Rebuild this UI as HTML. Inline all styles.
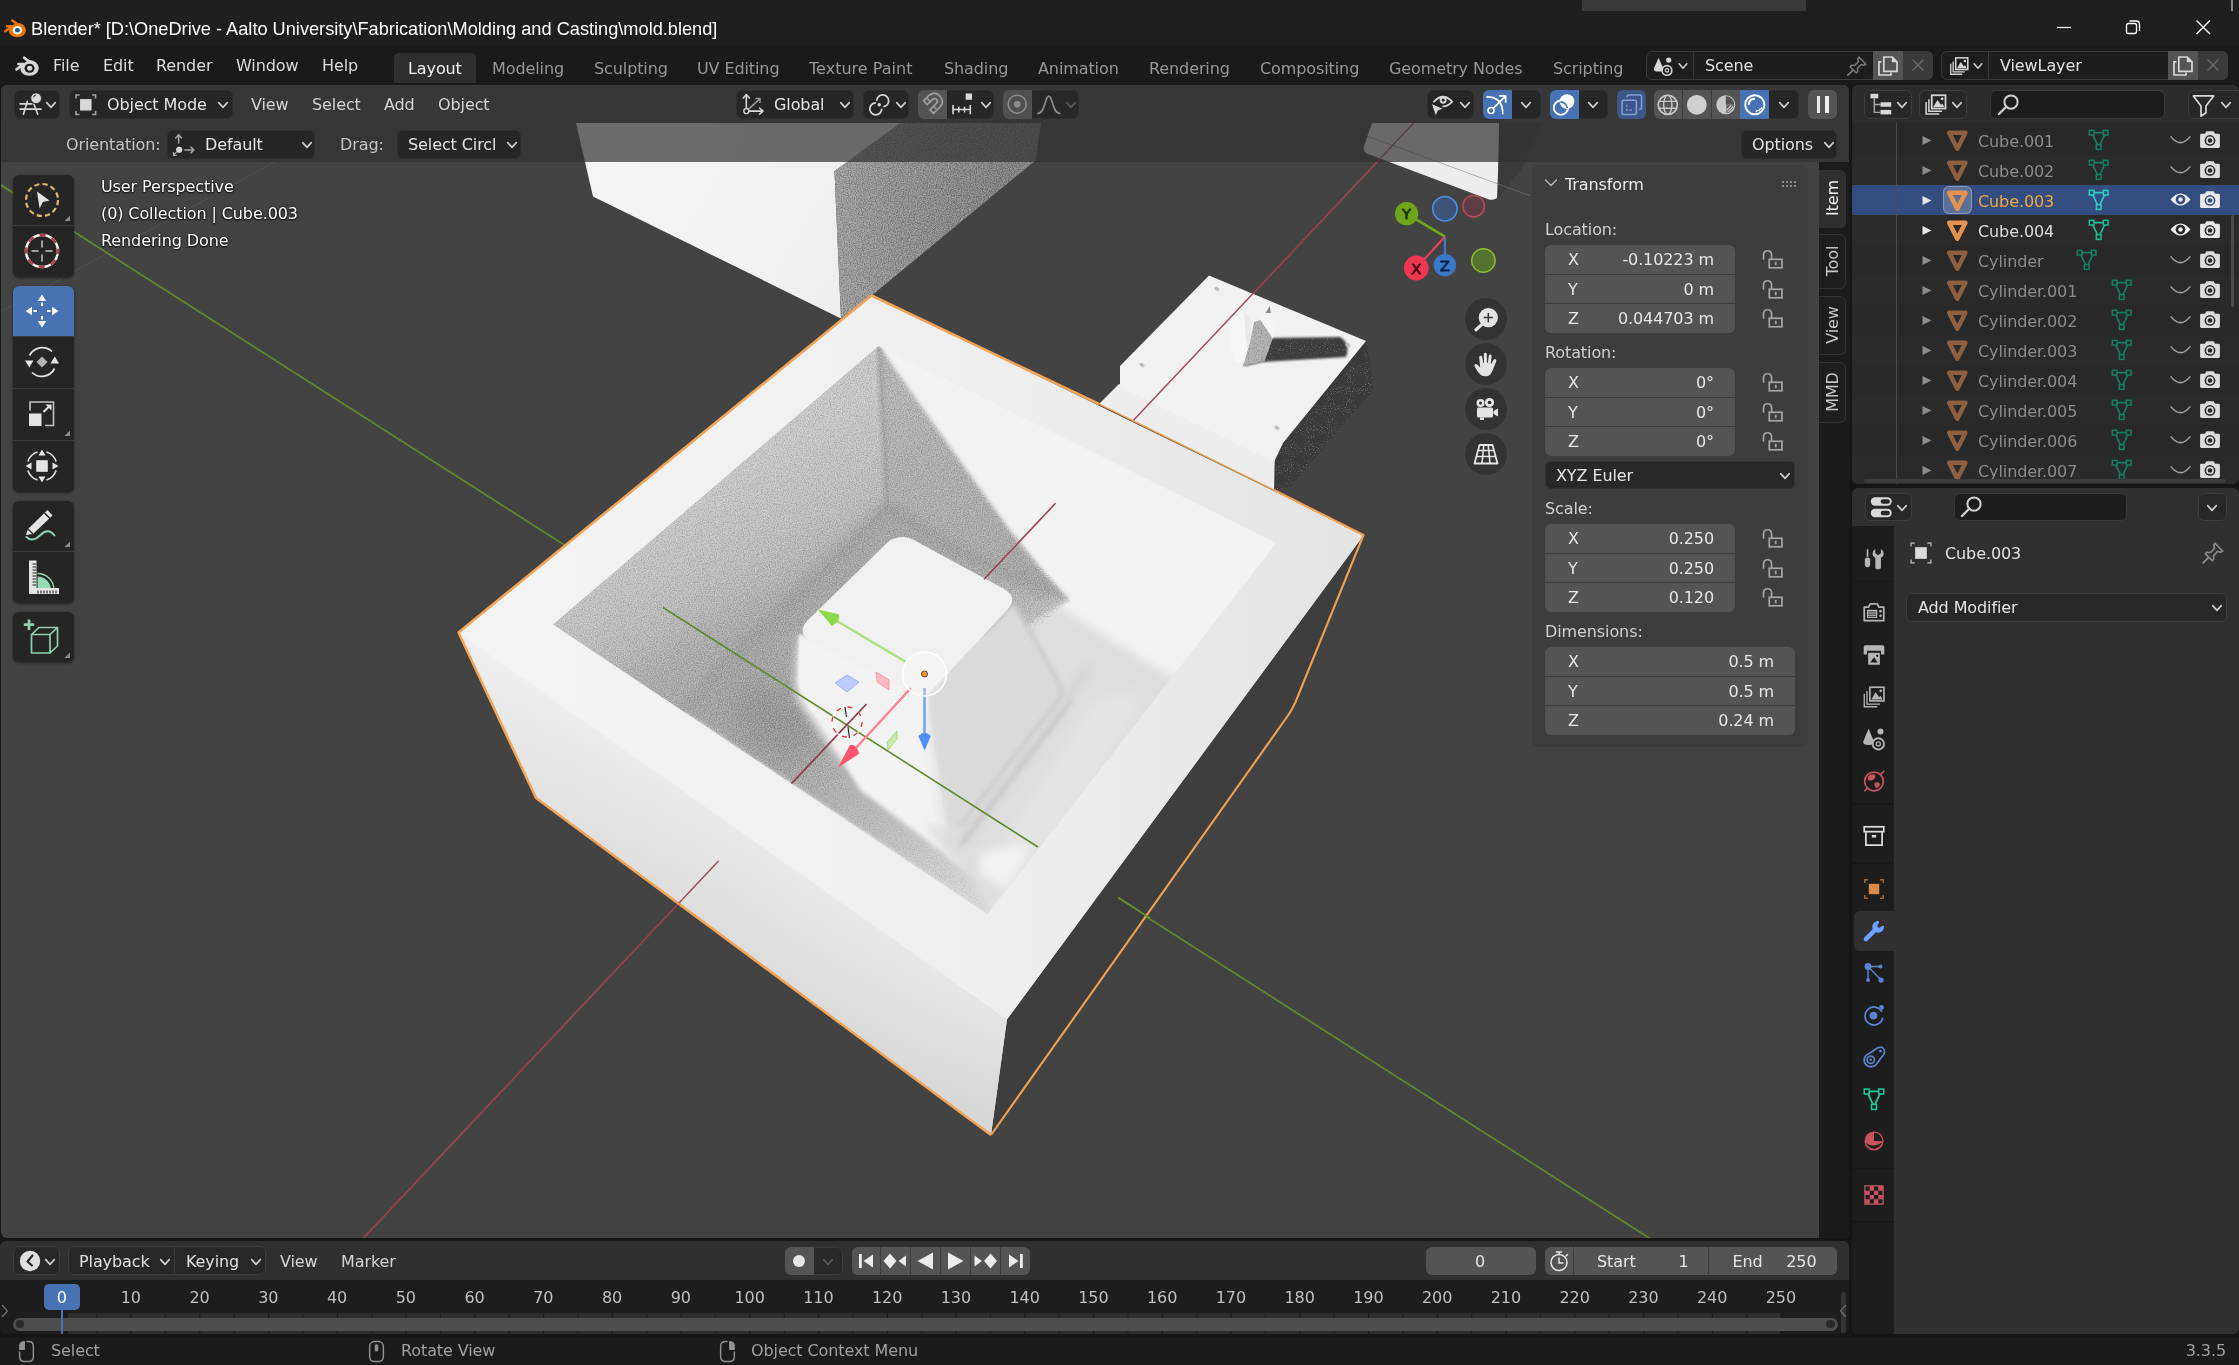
<!DOCTYPE html>
<html lang="en"><head><meta charset="utf-8"><title>Blender* [D:\OneDrive - Aalto University\Fabrication\Molding and Casting\mold.blend]</title><style>
html,body{margin:0;padding:0;background:#181818;}
#root{position:relative;width:2239px;height:1365px;overflow:hidden;background:#161616;will-change:transform;-webkit-font-smoothing:antialiased;
 font-family:"DejaVu Sans","Liberation Sans",sans-serif;font-size:16px;color:#d9d9d9;}
#root div,#root span,#root svg{position:absolute;box-sizing:border-box;}
.t{white-space:nowrap;line-height:24px;height:24px;letter-spacing:-0.1px;}
.c{transform:translateX(-50%);}
.sh{text-shadow:0 1px 2px rgba(0,0,0,.9),0 0 2px rgba(0,0,0,.8);color:#fff;}
.btn{background:#282828;border:1px solid #3d3d3d;border-radius:6px;}
.hbtn{background:#262626;border:1px solid #2e2e2e;border-radius:6px;}
.fld{background:#545454;}
.dim{color:#989898;}
</style></head>
<body><div id="root">
<div style="left:0px;top:0px;width:2239px;height:44.5px;background:#1f1f1f;"></div>
<div style="left:1582px;top:0px;width:224px;height:10.5px;background:#3a3a3a;"></div>
<div style="left:2231px;top:0px;width:1.5px;height:10.5px;background:#8a8a8a;"></div>
<svg class="i" style="left:1.5px;top:16.5px" width="26" height="21.7" viewBox="0 0 24 20"><path d="M3 13.2 L9.2 8.6 H4.6 M9.6 3.2 L13.2 6" fill="none" stroke="#ea7600" stroke-width="2.3" stroke-linecap="round" stroke-linejoin="round"/><path d="M13.6 5.2 C18.6 5.2 22 8.6 22 12.2 C22 15.8 18.6 18.6 14 18.6 C9.4 18.6 6.4 15.8 6.4 12.6 C6.4 11 7.4 9.4 8.6 8.4 Z" fill="#ea7600"/><ellipse cx="14.2" cy="12.2" rx="4.3" ry="3.9" fill="#ffffff"/><ellipse cx="14.3" cy="12.2" rx="2.3" ry="2.1" fill="#265787"/></svg>
<span class="t" style="left:31px;top:17px;font-family:'Liberation Sans',sans-serif;font-size:18.2px;letter-spacing:0;color:#fff;">Blender* [D:\OneDrive - Aalto University\Fabrication\Molding and Casting\mold.blend]</span>
<svg class="i" style="left:2040px;top:10px;" width="190" height="36" viewBox="0 0 190 36"><path d="M17 17.5 H31" stroke="#fff" stroke-width="1.2"/><rect x="86.5" y="13.5" width="10" height="10" rx="2" fill="none" stroke="#fff" stroke-width="1.3"/><path d="M89.5 11 H96 Q99.5 11 99.5 14.5 V21" fill="none" stroke="#fff" stroke-width="1.3"/><path d="M156.500 10.500 L170 24 M170 10.500 L156.500 24" stroke="#fff" stroke-width="1.4"/></svg>
<div style="left:0px;top:44.5px;width:2239px;height:40.5px;background:#1a1a1a;"></div>
<svg class="i" style="left:12.5px;top:53.5px" width="28" height="23.3" viewBox="0 0 24 20"><path d="M3 13.2 L9.2 8.6 H4.6 M9.6 3.2 L13.2 6" fill="none" stroke="#d6d6d6" stroke-width="2.3" stroke-linecap="round" stroke-linejoin="round"/><path d="M13.6 5.2 C18.6 5.2 22 8.6 22 12.2 C22 15.8 18.6 18.6 14 18.6 C9.4 18.6 6.4 15.8 6.4 12.6 C6.4 11 7.4 9.4 8.6 8.4 Z" fill="#d6d6d6"/><ellipse cx="14.2" cy="12.2" rx="4.3" ry="3.9" fill="#1a1a1a"/><ellipse cx="14.3" cy="12.2" rx="2.3" ry="2.1" fill="#d6d6d6"/></svg>
<span class="t" style="left:53px;top:54px;color:#dcdcdc;">File</span>
<span class="t" style="left:103px;top:54px;color:#dcdcdc;">Edit</span>
<span class="t" style="left:156px;top:54px;color:#dcdcdc;">Render</span>
<span class="t" style="left:236px;top:54px;color:#dcdcdc;">Window</span>
<span class="t" style="left:322px;top:54px;color:#dcdcdc;">Help</span>
<div style="left:394px;top:52.8px;width:82px;height:30.2px;background:#2f2f2f;border-radius:5px 5px 0 0;"></div>
<span class="t" style="left:408px;top:57px;color:#f0f0f0;">Layout</span>
<span class="t" style="left:492px;top:57px;color:#989898;">Modeling</span>
<span class="t" style="left:594px;top:57px;color:#989898;">Sculpting</span>
<span class="t" style="left:697px;top:57px;color:#989898;">UV Editing</span>
<span class="t" style="left:809px;top:57px;color:#989898;letter-spacing:0.02px;">Texture Paint</span>
<span class="t" style="left:944px;top:57px;color:#989898;">Shading</span>
<span class="t" style="left:1038px;top:57px;color:#989898;">Animation</span>
<span class="t" style="left:1149px;top:57px;color:#989898;">Rendering</span>
<span class="t" style="left:1260px;top:57px;color:#989898;">Compositing</span>
<span class="t" style="left:1389px;top:57px;color:#989898;">Geometry Nodes</span>
<span class="t" style="left:1553px;top:57px;color:#989898;">Scripting</span>
<div style="left:1646px;top:50.5px;width:287px;height:29.7px;background:#1d1d1d;border:1px solid #3a3a3a;border-radius:6px;"></div>
<div style="left:1693px;top:50.5px;width:1px;height:29.7px;background:#3a3a3a;"></div>
<div style="left:1873px;top:50.5px;width:30px;height:29.7px;background:#545454;"></div>
<div style="left:1903px;top:50.5px;width:30px;height:29.7px;background:#3a3a3a;border-radius:0 6px 6px 0;"></div>
<svg class="i" style="left:1652px;top:55px" width="22" height="22" viewBox="0 0 20 20"><path d="M6 2.5 L10.4 12.4 Q10.4 15 6 15 Q1.6 15 1.6 12.4 Z" fill="#d6d6d6"/><circle cx="15.2" cy="4.6" r="2.4" fill="#d6d6d6"/><circle cx="13.6" cy="14" r="4.4" fill="#181818" stroke="#d6d6d6" stroke-width="1.5"/><circle cx="13.6" cy="14" r="1.6" fill="none" stroke="#d6d6d6" stroke-width="1.1"/></svg>
<svg class="i" style="left:1675px;top:58px" width="16" height="16" viewBox="-8 -8 16 16"><path d="M-3.87 -2.16 L0 2.16 L3.87 -2.16" fill="none" stroke="#d0d0d0" stroke-width="1.6" stroke-linecap="round" stroke-linejoin="round"/></svg>
<span class="t" style="left:1705px;top:54px;color:#e0e0e0;">Scene</span>
<svg class="i" style="left:1845px;top:54px" width="24" height="24" viewBox="0 0 20 20"><path d="M11.5 2.5 L17.5 8.5 L15.8 9.4 L13.6 8.8 L10.4 12 L10.6 14.6 L9.4 15.8 L4.2 10.6 L5.4 9.4 L8 9.6 L11.2 6.4 L10.6 4.2 Z" fill="none" stroke="#7a7a7a" stroke-width="1.3" stroke-linejoin="round"/><path d="M6.6 13.4 L2.4 17.6" stroke="#7a7a7a" stroke-width="1.5" stroke-linecap="round"/></svg>
<svg class="i" style="left:1876px;top:53.5px" width="24" height="24" viewBox="0 0 20 20"><path d="M4.5 6.5 H2.5 V17.5 H12.5 V15.5" fill="none" stroke="#d8d8d8" stroke-width="1.4"/><path d="M6.5 2.5 H13.5 L17.5 6.5 V14.5 H6.5 Z" fill="none" stroke="#d8d8d8" stroke-width="1.4" stroke-linejoin="round"/><path d="M13.2 2.5 V6.8 H17.5 Z" fill="#d8d8d8"/></svg>
<svg class="i" style="left:1908px;top:55px" width="20" height="20" viewBox="0 0 20 20"><path d="M5 5 L15 15 M15 5 L5 15" stroke="#686868" stroke-width="1.5" stroke-linecap="round"/></svg>
<div style="left:1941px;top:50.5px;width:287px;height:29.7px;background:#1d1d1d;border:1px solid #3a3a3a;border-radius:6px;"></div>
<div style="left:1988px;top:50.5px;width:1px;height:29.7px;background:#3a3a3a;"></div>
<div style="left:2168px;top:50.5px;width:30px;height:29.7px;background:#545454;"></div>
<div style="left:2198px;top:50.5px;width:30px;height:29.7px;background:#3a3a3a;border-radius:0 6px 6px 0;"></div>
<svg class="i" style="left:1948px;top:55px" width="22" height="22" viewBox="0 0 20 20"><path d="M2.5 8 V17.5 H13" fill="none" stroke="#d6d6d6" stroke-width="1.2"/><path d="M4.7 5.8 V15.3 H15.2" fill="none" stroke="#d6d6d6" stroke-width="1.2"/><rect x="7" y="2.6" width="11" height="10.6" fill="#1d1d1d" stroke="#d6d6d6" stroke-width="1.4"/><path d="M8.2 12 L11.6 6.4 L14.4 10.4 L15.4 9.2 L17 12 Z" fill="#d6d6d6"/><circle cx="15.3" cy="5.4" r="1.1" fill="#d6d6d6"/></svg>
<svg class="i" style="left:1970px;top:58px" width="16" height="16" viewBox="-8 -8 16 16"><path d="M-3.87 -2.16 L0 2.16 L3.87 -2.16" fill="none" stroke="#d0d0d0" stroke-width="1.6" stroke-linecap="round" stroke-linejoin="round"/></svg>
<span class="t" style="left:2000px;top:54px;color:#e0e0e0;">ViewLayer</span>
<svg class="i" style="left:2171px;top:53.5px" width="24" height="24" viewBox="0 0 20 20"><path d="M4.5 6.5 H2.5 V17.5 H12.5 V15.5" fill="none" stroke="#d8d8d8" stroke-width="1.4"/><path d="M6.5 2.5 H13.5 L17.5 6.5 V14.5 H6.5 Z" fill="none" stroke="#d8d8d8" stroke-width="1.4" stroke-linejoin="round"/><path d="M13.2 2.5 V6.8 H17.5 Z" fill="#d8d8d8"/></svg>
<svg class="i" style="left:2203px;top:55px" width="20" height="20" viewBox="0 0 20 20"><path d="M5 5 L15 15 M15 5 L5 15" stroke="#686868" stroke-width="1.5" stroke-linecap="round"/></svg>
<svg class="i" style="left:0;top:0" width="2239" height="1365" viewBox="0 0 2239 1365">
<defs>
<clipPath id="vp"><rect x="1" y="85" width="1848" height="1153" rx="6"/></clipPath>
<clipPath id="cav"><polygon points="878.5,346 1276.5,543 987.5,914.5 553,624.5"/></clipPath>
<filter id="b1" x="-20%" y="-20%" width="140%" height="140%"><feGaussianBlur stdDeviation="1.1"/></filter>
<filter id="b2" x="-20%" y="-20%" width="140%" height="140%"><feGaussianBlur stdDeviation="2"/></filter>
<filter id="b5" x="-30%" y="-30%" width="160%" height="160%"><feGaussianBlur stdDeviation="5"/></filter>
<filter id="b9" x="-30%" y="-30%" width="160%" height="160%"><feGaussianBlur stdDeviation="9"/></filter>
<filter id="b16" x="-40%" y="-40%" width="180%" height="180%"><feGaussianBlur stdDeviation="16"/></filter>
<filter id="grain" x="0" y="0" width="100%" height="100%" color-interpolation-filters="sRGB">
 <feTurbulence type="fractalNoise" baseFrequency="0.85" numOctaves="2" seed="3" result="n"/>
 <feColorMatrix in="n" type="matrix" values="0 0 0 0 0  0 0 0 0 0  0 0 0 0 0  -1.5 0 0 0 0.78"/>
 <feComposite in2="SourceGraphic" operator="in"/>
</filter>
<filter id="grainl" x="0" y="0" width="100%" height="100%" color-interpolation-filters="sRGB">
 <feTurbulence type="fractalNoise" baseFrequency="0.85" numOctaves="2" seed="3" result="n"/>
 <feColorMatrix in="n" type="matrix" values="0 0 0 0 1  0 0 0 0 1  0 0 0 0 1  1.5 0 0 0 -0.72"/>
 <feComposite in2="SourceGraphic" operator="in"/>
</filter>
<filter id="grainw" x="0" y="0" width="100%" height="100%" color-interpolation-filters="sRGB">
 <feTurbulence type="fractalNoise" baseFrequency="0.95" numOctaves="1" seed="8" result="n"/>
 <feColorMatrix in="n" type="matrix" values="0 0 0 0 1  0 0 0 0 1  0 0 0 0 1  3 0 0 0 -1.75"/>
 <feComposite in2="SourceGraphic" operator="in"/>
</filter>
<linearGradient id="gLeft" gradientUnits="userSpaceOnUse" x1="732.700" y1="825.700" x2="652" y2="940">
 <stop offset="0" stop-color="#e9e9e9"/><stop offset="0.35" stop-color="#e2e2e2"/><stop offset="1" stop-color="#d7d7d7"/></linearGradient>
<linearGradient id="gLeft2" gradientUnits="userSpaceOnUse" x1="480" y1="680" x2="1000" y2="1080">
 <stop offset="0" stop-color="#ffffff" stop-opacity="0.25"/><stop offset="0.5" stop-color="#ffffff" stop-opacity="0"/><stop offset="1" stop-color="#000000" stop-opacity="0.025"/></linearGradient>
<linearGradient id="gRim" gradientUnits="userSpaceOnUse" x1="500" y1="600" x2="1350" y2="600">
 <stop offset="0" stop-color="#f3f3f3"/><stop offset="0.6" stop-color="#eeeeee"/><stop offset="1" stop-color="#e4e4e4"/></linearGradient>
<linearGradient id="gUp" gradientUnits="userSpaceOnUse" x1="600" y1="160" x2="840" y2="300">
 <stop offset="0" stop-color="#f5f5f5"/><stop offset="1" stop-color="#eeeeee"/></linearGradient>
</defs>
<g clip-path="url(#vp)">
<rect x="0" y="85" width="1849" height="1153" fill="#434343"/>
<line x1="0" y1="312" x2="280" y2="159" stroke="#505050" stroke-width="1"/><line x1="-10" y1="178.100" x2="1660" y2="1244.900" stroke="#5f8a2c" stroke-width="1.7"/>
<line x1="357.800" y1="1244" x2="1443" y2="92" stroke="#96434f" stroke-width="1.8"/>
<path d="M1372 123 L1500 123 L1497 198 Q1494 200.500 1489 199.500 L1368 154 Q1362 151 1364 146 Z" fill="#ededed"/>
<path d="M1499 123 L1543 123 L1522 168 L1498 199 Z" fill="#3b3b3b"/>
<line x1="1377.400" y1="161.500" x2="1413.700" y2="123" stroke="#92424f" stroke-width="1.4" opacity="0.8"/>
<line x1="1366" y1="135.600" x2="1530" y2="195.700" stroke="#7a7a7a" stroke-width="1" opacity="0.55"/>
<polygon points="576,123 593,196.5 841,318.5 834.5,171 905,123" fill="url(#gUp)"/>
<linearGradient id="gUg" gradientUnits="userSpaceOnUse" x1="835" y1="200" x2="1000" y2="200"><stop offset="0" stop-color="#9c9c9c"/><stop offset="1" stop-color="#828282"/></linearGradient>
<polygon points="834.5,171 900,123 1041,123 1036,160 871,296 841,318.5" fill="url(#gUg)"/>
<polygon points="834.5,171 900,123 1041,123 1036,160 871,296 841,318.5" fill="#000" filter="url(#grain)" opacity="0.5"/>
<polygon points="834.5,171 900,123 1041,123 1036,160 871,296 841,318.5" fill="#fff" filter="url(#grainl)" opacity="0.5"/>
<polygon points="1366,341 1374,389 1290,487 1275,490 1274,447" fill="#3a3a3a"/>
<polygon points="1366,352 1374,389 1290,487 1275,490 1274,447" fill="#fff" filter="url(#grainw)" opacity="0.5"/>
<polygon points="1119,384 1099,404 1274,490 1275,447" fill="#ededed"/>
<polygon points="1209,275.5 1366,341 1283,443 1274,462 1120,387 1120,366" fill="#f1f1f1"/>
<path d="M1271 338 L1340 337 Q1351 344 1346 357 L1262 362 L1243 366.500 Z" fill="#3c3c3c" filter="url(#b1)"/>
<polygon points="1270,340 1341,337 1348,352 1262,361 1243,366" fill="#fff" filter="url(#grainw)" opacity="0.45"/>
<polygon points="1230.7,318 1244,311.8 1251.5,319 1250,361 1236,363 1228.7,338.4" fill="#f6f6f6"/>
<polygon points="1244,311.8 1251.5,319 1250,361 1246,340" fill="#e9e9e9"/>
<polygon points="1254,322 1260.5,320 1272.8,338.4 1264.6,361 1243,366 1250,342.5" fill="#b4b4b4"/>
<polygon points="1254,322 1260.5,320 1272.8,338.4 1264.6,361 1243,366 1250,342.5" fill="#000" filter="url(#grain)" opacity="0.45"/>
<polygon points="1260.5,320 1265.6,313.8 1277,321 1272.8,338.4" fill="#f4f4f4"/>
<polygon points="1265.6,313 1269.7,306 1270.9,313" fill="#8a8a8a"/>
<ellipse cx="1217" cy="289" rx="2.8" ry="2" fill="#c9c9c9" transform="rotate(25 1217 289)"/><ellipse cx="1216.4" cy="288.7" rx="1.5" ry="1.1" fill="#b0b0b0" transform="rotate(25 1217 289)"/>
<ellipse cx="1142" cy="365" rx="2.8" ry="2" fill="#c9c9c9" transform="rotate(25 1142 365)"/><ellipse cx="1141.4" cy="364.7" rx="1.5" ry="1.1" fill="#b0b0b0" transform="rotate(25 1142 365)"/>
<ellipse cx="1348" cy="345" rx="2.8" ry="2" fill="#c9c9c9" transform="rotate(25 1348 345)"/><ellipse cx="1347.4" cy="344.7" rx="1.5" ry="1.1" fill="#b0b0b0" transform="rotate(25 1348 345)"/>
<ellipse cx="1277" cy="428" rx="2.8" ry="2" fill="#c9c9c9" transform="rotate(25 1277 428)"/><ellipse cx="1276.4" cy="427.7" rx="1.5" ry="1.1" fill="#b0b0b0" transform="rotate(25 1277 428)"/>
<line x1="1132.800" y1="421" x2="1253.500" y2="293" stroke="#a34a58" stroke-width="1.5"/>
<polygon points="1363.5,535 1294,707 991,1135 1007,1019" fill="#3e3e3e"/>
<polygon points="871.5,295.5 1363.5,535 1007,1019 991,1135 536,798 458.5,632.5" fill="#ececec"/>
<polygon points="458.5,632.5 1007,1019 991,1135 536,798" fill="url(#gLeft)"/>
<polygon points="458.5,632.5 1007,1019 991,1135 536,798" fill="url(#gLeft2)"/>
<polygon points="871.5,295.5 1363.5,535 1007,1019 458.5,632.5" fill="url(#gRim)" stroke="url(#gRim)" stroke-width="0.8"/>
<g clip-path="url(#cav)">
<linearGradient id="gWall" gradientUnits="userSpaceOnUse" x1="716" y1="485" x2="786" y2="606"><stop offset="0" stop-color="#c8c8c8"/><stop offset="0.6" stop-color="#bcbcbc"/><stop offset="1" stop-color="#aaaaaa"/></linearGradient>
<linearGradient id="gFloor" gradientUnits="userSpaceOnUse" x1="720" y1="690" x2="990" y2="900"><stop offset="0" stop-color="#a6a6a6"/><stop offset="0.3" stop-color="#a8a8a8"/><stop offset="0.55" stop-color="#b8b8b8"/><stop offset="0.8" stop-color="#cccccc"/><stop offset="1" stop-color="#dadada"/></linearGradient>
<linearGradient id="gWallR" gradientUnits="userSpaceOnUse" x1="880" y1="400" x2="1040" y2="580"><stop offset="0" stop-color="#b4b4b4"/><stop offset="1" stop-color="#a6a6a6"/></linearGradient>
<polygon points="878.5,346 1276.5,543 987.5,914.5 553,624.5" fill="#f2f2f2"/>
<polygon points="1005,612 1056,604 1120,646 1182,682 1100,790 987.5,914.5 930,830 920,700" fill="#dedede" filter="url(#b5)"/>
<polygon points="1095,700 1150,690 1060,830 1015,880 1005,840" fill="#e4e4e4" filter="url(#b9)"/>
<polyline points="962,842 1030,750 1088,668" fill="none" stroke="#cccccc" stroke-width="5" filter="url(#b5)" opacity="0.9"/>
<polygon points="984,850 1032,846 1006,890 978,872" fill="#f2f2f2" filter="url(#b5)"/>
<polygon points="878.5,346 960,500 1068,600 1020,630 960,640 900,650 820,720 860,790 940,850 975,880 1000,925 987.5,914.5 553,624.5" fill="url(#gFloor)" filter="url(#b2)"/>
<polygon points="878.5,346 945,440 1008,528 1040,568 1070,602 960,554 887,504" fill="url(#gWallR)" filter="url(#b2)"/>
<polygon points="878.5,346 553,624.5 684,712 887,504" fill="url(#gWall)"/>
<polyline points="887,504 800,590 720,668 684,712" fill="none" stroke="#989898" stroke-width="10" filter="url(#b5)" opacity="0.55"/>
<polyline points="887,504 960,552 1050,598" fill="none" stroke="#989898" stroke-width="10" filter="url(#b5)" opacity="0.6"/>
<line x1="878.5" y1="346" x2="887" y2="503" stroke="#a0a0a0" stroke-width="4" filter="url(#b2)"/>
<ellipse cx="775" cy="722" rx="48" ry="30" fill="#8e8e8e" filter="url(#b16)" opacity="0.75" transform="rotate(38 775 722)"/>
<polygon points="878.5,346 1008,528 1070,600 1000,660 800,700 850,790 800,789 553,624.5" fill="#000" filter="url(#grain)" opacity="0.3"/>
<polygon points="878.5,346 1008,528 1070,600 1000,660 800,700 850,790 800,789 553,624.5" fill="#fff" filter="url(#grainl)" opacity="0.55"/>
<polygon points="800,789 850,790 960,870 987.5,914.5" fill="#000" filter="url(#grain)" opacity="0.2"/>
<polygon points="800,789 850,790 960,870 987.5,914.5" fill="#fff" filter="url(#grainl)" opacity="0.3"/>
<path d="M926 693 L1014 604 L1060 684 Q1064 692 1059 699 L960 826 Q952 834 943 828 Z" fill="#dadada" filter="url(#b2)"/>
<path d="M1014 604 L1060 684 Q1064 692 1059 699 L960 826" fill="none" stroke="#c6c6c6" stroke-width="3" filter="url(#b2)"/>
<path d="M960 846 L1072 700" fill="none" stroke="#c4c4c4" stroke-width="4" filter="url(#b2)" opacity="0.8"/>
<path d="M799 636 L926 693 L948 833 Q905 812 872 790 L836 754 L802 706 Q795 694 796 680 Z" fill="#f2f2f2" filter="url(#b5)"/>
<path d="M799 634 L926 693 L946 826 L908 806 L874 782 L840 748 L806 702 Q798 690 798 676 Z" fill="#f2f2f2" filter="url(#b1)"/>
<path d="M929 708 L946 828" fill="none" stroke="#d2d2d2" stroke-width="5" filter="url(#b5)" opacity="0.8"/>
<path d="M889 541 Q900 534 912 539 L1004 589 Q1018 597 1008 609 L932 690 Q924 697 912 692 L812 642 Q797 634 806 622 Z" fill="#f0f0f0"/>
<line x1="663" y1="607.5" x2="1038" y2="847" stroke="#5f8a2c" stroke-width="1.6"/>
<line x1="790" y1="785.200" x2="866.500" y2="704" stroke="#8d3f4c" stroke-width="1.8"/>
<line x1="984" y1="579.200" x2="1055.500" y2="503.300" stroke="#9a4452" stroke-width="1.6"/>
</g>
<polyline points="1099,404 871.5,295.5 458.5,632.5 536,798 991,1135" fill="none" stroke="#f2a456" stroke-width="2.5" stroke-linejoin="round"/>
<polyline points="991,1135 1288,715.5 1292,709 1295.5,702 1363.5,535 1274,490" fill="none" stroke="#f0a050" stroke-width="2.1" stroke-linejoin="round"/>
<polyline points="1099,404 1274,490" fill="none" stroke="#f0a050" stroke-width="1.6" opacity="0.9"/>
<line x1="718.500" y1="861" x2="679" y2="903" stroke="#a04a58" stroke-width="1.5"/>
<line x1="1118" y1="897.5" x2="1150" y2="918" stroke="#6a962f" stroke-width="1.5"/>
<circle cx="847" cy="722" r="15" fill="none" stroke="#fff" stroke-width="1.3"/>
<circle cx="847" cy="722" r="15" fill="none" stroke="#e0303c" stroke-width="1.3" stroke-dasharray="5 6.780"/>
<path d="M845 707 L846.500 717 M848 727 L849.500 738" stroke="#1a1a1a" stroke-width="1.1" fill="none"/>
<polygon points="835,683 847,675 859,682 847,692" fill="#b9c8ff" stroke="#8aa0f0" stroke-width="0.8" opacity="0.9"/>
<polygon points="876,672 889,680 889,690 877,682" fill="#ffb3bd" stroke="#f08090" stroke-width="0.8" opacity="0.9"/>
<polygon points="887,742 897,731 897,739 888,750" fill="#c4e8a0" stroke="#a0d070" stroke-width="0.8" opacity="0.9"/>
<line x1="906" y1="662" x2="836" y2="620.500" stroke="#a9e07c" stroke-width="2.4"/>
<path d="M817.800 609.600 L838.900 614.200 Q840.500 621 832 626 Z" fill="#8ed94a"/>
<line x1="911" y1="688" x2="855" y2="749" stroke="#ff8090" stroke-width="2.4"/>
<path d="M838 767.500 L849.800 745.200 Q856 743 859.200 753.800 Z" fill="#ff566e"/>
<line x1="924.5" y1="688" x2="924.5" y2="734" stroke="#6f9cf5" stroke-width="2.4"/>
<path d="M918.400 736 Q924.500 729.500 930.800 736 L924.600 750.500 Z" fill="#4f8df7"/>
<circle cx="924.5" cy="674" r="22" fill="#ffffff" fill-opacity="0.25" stroke="#ffffff" stroke-width="1.6"/>
<circle cx="924.5" cy="674" r="3" fill="#f39a3c" stroke="#3a2a18" stroke-width="0.8"/>
</g></svg>
<div style="left:1px;top:85px;width:1848px;height:38px;background:#373737;border-radius:6px 6px 0 0;"></div>
<div style="left:1px;top:123px;width:1848px;height:39px;background:rgba(48,48,48,.7);"></div>
<div class="hbtn" style="left:14px;top:90px;width:46px;height:28.5px;"></div>
<svg class="i" style="left:17.2px;top:91.2px" width="27.6" height="27.6" viewBox="0 0 24 24"><path d="M2.700 11.200 H13 M2.700 15.800 H20.900 M9 9 L5.600 20.200 M14.800 11.500 L18 20.200" stroke="#d8d8d8" stroke-width="1.400" fill="none" stroke-linecap="round"/><circle cx="16.600" cy="6.300" r="4.700" fill="#d8d8d8" stroke="#262626" stroke-width="0.800"/><path d="M14.200 5.400 A2.900 2.900 0 0 1 16.600 3.600" stroke="#555" stroke-width="1.100" fill="none"/></svg>
<svg class="i" style="left:43px;top:97px" width="16" height="16" viewBox="-8 -8 16 16"><path d="M-4.3 -2.4 L0 2.4 L4.3 -2.4" fill="none" stroke="#d0d0d0" stroke-width="1.6" stroke-linecap="round" stroke-linejoin="round"/></svg>
<div class="hbtn" style="left:69px;top:90px;width:164px;height:28.5px;"></div>
<svg class="i" style="left:72.2px;top:91.2px" width="27.6" height="27.6" viewBox="0 0 24 24"><rect x="7" y="7" width="10" height="10" fill="#d8d8d8"/><path d="M6.500 3.500 H3.500 V6.500 M17.5 3.500 H20.500 V6.500 M3.500 17.5 V20.500 H6.500 M20.500 17.5 V20.500 H17.5" fill="none" stroke="#d8d8d8" stroke-width="1.4" opacity="0.700"/></svg>
<span class="t" style="left:107px;top:93px;color:#e4e4e4;">Object Mode</span>
<svg class="i" style="left:215px;top:97px" width="16" height="16" viewBox="-8 -8 16 16"><path d="M-4.3 -2.4 L0 2.4 L4.3 -2.4" fill="none" stroke="#d0d0d0" stroke-width="1.6" stroke-linecap="round" stroke-linejoin="round"/></svg>
<span class="t" style="left:251px;top:93px;color:#d4d4d4;">View</span>
<span class="t" style="left:312px;top:93px;color:#d4d4d4;">Select</span>
<span class="t" style="left:384px;top:93px;color:#d4d4d4;">Add</span>
<span class="t" style="left:438px;top:93px;color:#d4d4d4;">Object</span>
<div class="hbtn" style="left:736px;top:90px;width:118px;height:28.5px;"></div>
<svg class="i" style="left:739.5px;top:90.7px" width="27.6" height="27.6" viewBox="0 0 24 24"><path d="M5.500 3.500 V17.5 L19.5 17.5" fill="none" stroke="#d8d8d8" stroke-width="1.4" stroke-linecap="round"/><path d="M5.500 17.5 L17 7" fill="none" stroke="#9a9a9a" stroke-width="1.4" stroke-linecap="round"/><path d="M14 6.600 L17.5 6.500 L17.3 10" fill="none" stroke="#9a9a9a" stroke-width="1.3" stroke-linecap="round" stroke-linejoin="round"/><path d="M2.8 6 L5.500 3 L8.200 6 M17 14.800 L20 17.5 L17 20.200" fill="none" stroke="#d8d8d8" stroke-width="1.3" stroke-linecap="round" stroke-linejoin="round"/><circle cx="5.500" cy="17.5" r="2.2" fill="#252525" stroke="#d8d8d8" stroke-width="1.2"/></svg>
<span class="t" style="left:774px;top:93px;color:#e4e4e4;">Global</span>
<svg class="i" style="left:837px;top:97px" width="16" height="16" viewBox="-8 -8 16 16"><path d="M-4.3 -2.4 L0 2.4 L4.3 -2.4" fill="none" stroke="#d0d0d0" stroke-width="1.6" stroke-linecap="round" stroke-linejoin="round"/></svg>
<div class="hbtn" style="left:863px;top:90px;width:46px;height:28.5px;"></div>
<svg class="i" style="left:866.2px;top:90.7px" width="27.6" height="27.6" viewBox="0 0 24 24"><circle cx="14.5" cy="8.500" r="5.200" fill="none" stroke="#d8d8d8" stroke-width="1.5" stroke-dasharray="24 8.700" stroke-dashoffset="-16"/><circle cx="8.500" cy="15.5" r="5.200" fill="none" stroke="#d8d8d8" stroke-width="1.5" stroke-dasharray="24 8.700" stroke-dashoffset="0"/><circle cx="11.5" cy="12" r="1.5" fill="#d8d8d8"/></svg>
<svg class="i" style="left:893px;top:97px" width="16" height="16" viewBox="-8 -8 16 16"><path d="M-4.3 -2.4 L0 2.4 L4.3 -2.4" fill="none" stroke="#d0d0d0" stroke-width="1.6" stroke-linecap="round" stroke-linejoin="round"/></svg>
<div class="hbtn" style="left:918px;top:90px;width:76px;height:28.5px;"></div>
<div style="left:918px;top:90px;width:29px;height:28.5px;background:#545454;border-radius:6px 0 0 6px;"></div>
<svg class="i" style="left:916.66px;top:88.66px" width="31.68" height="31.68" viewBox="0 0 24 24"><path d="M5 9 L9.500 4.500 Q14 1.500 17.5 5.500 Q21 10 17.5 13.5 L12.5 18.5 L9.800 15.8 L14.800 10.800 Q16.200 9.200 14.800 7.800 Q13.400 6.600 12 7.800 L7.700 11.8 Z" fill="none" stroke="#9a9a9a" stroke-width="1.4" stroke-linejoin="round"/><path d="M7.500 7 L10 9.600 M12.500 13 L15.2 15.7" stroke="#9a9a9a" stroke-width="1.2"/></svg>
<svg class="i" style="left:948.7px;top:89.5px" width="27.6" height="27.6" viewBox="0 0 24 24"><path d="M3 17 H19 M3.500 13 V21 M8.500 14.5 V19.5 M13.500 14.5 V19.5 M18.500 13 V21" stroke="#d8d8d8" stroke-width="1.4" fill="none"/><rect x="14.5" y="3" width="5.500" height="5.500" fill="#d8d8d8"/></svg>
<svg class="i" style="left:978px;top:97px" width="16" height="16" viewBox="-8 -8 16 16"><path d="M-4.3 -2.4 L0 2.4 L4.3 -2.4" fill="none" stroke="#d0d0d0" stroke-width="1.6" stroke-linecap="round" stroke-linejoin="round"/></svg>
<div class="hbtn" style="left:1003px;top:90px;width:76px;height:28.5px;opacity:.85"></div>
<div style="left:1003px;top:90px;width:29px;height:28.5px;background:#505050;border-radius:6px 0 0 6px;"></div>
<svg class="i" style="left:1004.1px;top:91.1px" width="26.4" height="26.4" viewBox="0 0 24 24"><circle cx="12" cy="12" r="8.200" fill="none" stroke="#8c8c8c" stroke-width="1.4"/><circle cx="12" cy="12" r="3" fill="#8c8c8c"/></svg>
<svg class="i" style="left:1035.2px;top:90.7px" width="27.6" height="27.6" viewBox="0 0 24 24"><path d="M2.500 19.5 C9 19.5 8.500 4.500 12 4.500 C15.500 4.500 15 19.5 21.5 19.5" fill="none" stroke="#8a8a8a" stroke-width="1.5" stroke-linecap="round"/></svg>
<svg class="i" style="left:1063px;top:97px" width="16" height="16" viewBox="-8 -8 16 16"><path d="M-4.3 -2.4 L0 2.4 L4.3 -2.4" fill="none" stroke="#5a5a5a" stroke-width="1.6" stroke-linecap="round" stroke-linejoin="round"/></svg>
<div class="hbtn" style="left:1427px;top:90px;width:47px;height:28.5px;"></div>
<svg class="i" style="left:1428.2px;top:91.2px" width="27.6" height="27.6" viewBox="0 0 24 24"><path d="M5.200 9.200 Q13 0.800 21 9.200 Q17.5 13.200 13.2 13.400" fill="none" stroke="#d8d8d8" stroke-width="1.600" stroke-linecap="round"/><circle cx="13.2" cy="8" r="3" fill="#d8d8d8"/><circle cx="13.2" cy="8" r="1.300" fill="#262626"/><path d="M2.800 10.800 L13.600 15.400 L8.800 17.200 L6.800 22.200 Z" fill="#d8d8d8" stroke="#262626" stroke-width="0.800"/></svg>
<svg class="i" style="left:1457px;top:97px" width="16" height="16" viewBox="-8 -8 16 16"><path d="M-4.3 -2.4 L0 2.4 L4.3 -2.4" fill="none" stroke="#d0d0d0" stroke-width="1.6" stroke-linecap="round" stroke-linejoin="round"/></svg>
<div class="hbtn" style="left:1483px;top:90px;width:58px;height:28.5px;"></div>
<div style="left:1483px;top:90px;width:29px;height:28.5px;background:#4772b3;border-radius:6px 0 0 6px;"></div>
<svg class="i" style="left:1483.2px;top:91.2px" width="27.6" height="27.6" viewBox="0 0 24 24"><path d="M3.500 5.200 C12 5.200 17 9.500 17.2 19.5" fill="none" stroke="#ffffff" stroke-width="1.5" stroke-linecap="round"/><path d="M8.800 15.2 L19.2 4.800 M14.500 4.300 H19.700 V9.500" fill="none" stroke="#ffffff" stroke-width="1.5" stroke-linecap="round" stroke-linejoin="round"/><circle cx="7" cy="17" r="2.600" fill="#4772b3" stroke="#ffffff" stroke-width="1.4"/></svg>
<svg class="i" style="left:1518px;top:97px" width="16" height="16" viewBox="-8 -8 16 16"><path d="M-4.3 -2.4 L0 2.4 L4.3 -2.4" fill="none" stroke="#d0d0d0" stroke-width="1.6" stroke-linecap="round" stroke-linejoin="round"/></svg>
<div class="hbtn" style="left:1550px;top:90px;width:58px;height:28.5px;"></div>
<div style="left:1550px;top:90px;width:29px;height:28.5px;background:#4772b3;border-radius:6px 0 0 6px;"></div>
<svg class="i" style="left:1550.2px;top:91.2px" width="27.6" height="27.6" viewBox="0 0 24 24"><circle cx="14.8" cy="9.200" r="6.400" fill="#ffffff"/><circle cx="9.500" cy="14.5" r="6.200" fill="none" stroke="#ffffff" stroke-width="1.6"/><path d="M9 9.500 A6 6 0 0 1 15 14.800" fill="none" stroke="#4772b3" stroke-width="1.5"/></svg>
<svg class="i" style="left:1585px;top:97px" width="16" height="16" viewBox="-8 -8 16 16"><path d="M-4.3 -2.4 L0 2.4 L4.3 -2.4" fill="none" stroke="#d0d0d0" stroke-width="1.6" stroke-linecap="round" stroke-linejoin="round"/></svg>
<div style="left:1617px;top:90px;width:29px;height:28.5px;background:#3c5688;border-radius:6px;"></div>
<svg class="i" style="left:1617.7px;top:91.2px" width="27.6" height="27.6" viewBox="0 0 24 24"><rect x="3.500" y="8" width="12.5" height="12.5" rx="1.5" fill="none" stroke="#7f9fd6" stroke-width="1.4"/><path d="M8 5.500 V5 Q8 3.500 9.500 3.500 H19 Q20.500 3.500 20.500 5 V14.500 Q20.500 16 19 16 H18.500" fill="none" stroke="#7f9fd6" stroke-width="1.4"/><path d="M7.500 12 V16.500 H12" fill="none" stroke="#7f9fd6" stroke-width="1.2" stroke-dasharray="2 1.500"/></svg>
<div class="hbtn" style="left:1654px;top:90px;width:145px;height:28.5px;"></div>
<div style="left:1654px;top:90px;width:86.3px;height:28.5px;background:#545454;border-radius:6px 0 0 6px;"></div>
<div style="left:1682.2px;top:90px;width:1px;height:28.5px;background:#3c3c3c;"></div>
<div style="left:1711px;top:90px;width:1px;height:28.5px;background:#3c3c3c;"></div>
<div style="left:1740.2px;top:90px;width:29px;height:28.5px;background:#4772b3;"></div>
<svg class="i" style="left:1654.2px;top:90.7px" width="27.6" height="27.6" viewBox="0 0 24 24"><circle cx="12" cy="12" r="8.300" fill="none" stroke="#c8c8c8" stroke-width="1.500"/><ellipse cx="12" cy="12" rx="3.600" ry="8.300" fill="none" stroke="#c8c8c8" stroke-width="1.200"/><path d="M4.600 9 H19.400 M4.600 15 H19.400" stroke="#c8c8c8" stroke-width="1.200"/></svg>
<svg class="i" style="left:1682.9px;top:90.7px" width="27.6" height="27.6" viewBox="0 0 24 24"><circle cx="12" cy="12" r="8.600" fill="#d0d0d0"/></svg>
<svg class="i" style="left:1711.7px;top:90.7px" width="27.6" height="27.6" viewBox="0 0 24 24"><circle cx="12" cy="12" r="8.300" fill="#c8c8c8"/><path d="M12 12 V4.600 A7.400 7.400 0 0 1 19.400 12 Z" fill="#545454"/><path d="M12.5 12.5 H19.300 A7.300 7.300 0 0 1 12.500 19.300 Z" fill="#545454"/><path d="M13.500 18.500 L18.500 13.500 M15.800 18.600 L18.800 15.600 M12.700 16.600 L16.700 12.600" stroke="#c8c8c8" stroke-width="1.100"/></svg>
<svg class="i" style="left:1740.9px;top:90.7px" width="27.6" height="27.6" viewBox="0 0 24 24"><circle cx="12" cy="12" r="8.300" fill="none" stroke="#ffffff" stroke-width="1.700"/><path d="M6.800 11.500 A5.300 5.300 0 0 1 11.500 6.800" fill="none" stroke="#ffffff" stroke-width="1.700" stroke-linecap="round"/><path d="M13 18.300 L14.500 16.600 M15.300 17.400 L16.800 15.700 M17.200 15.800 L18.300 14.400" stroke="#ffffff" stroke-width="1.200"/></svg>
<svg class="i" style="left:1776px;top:97px" width="16" height="16" viewBox="-8 -8 16 16"><path d="M-4.3 -2.4 L0 2.4 L4.3 -2.4" fill="none" stroke="#d0d0d0" stroke-width="1.6" stroke-linecap="round" stroke-linejoin="round"/></svg>
<div style="left:1808px;top:90px;width:29px;height:28.5px;background:#545454;border-radius:6px;"></div>
<div style="left:1816.5px;top:96px;width:3.5px;height:17px;background:#ececec;"></div>
<div style="left:1825px;top:96px;width:3.5px;height:17px;background:#ececec;"></div>
<span class="t" style="left:66px;top:133px;color:#c4c4c4;">Orientation:</span>
<div class="hbtn" style="left:167px;top:130px;width:148px;height:28.5px;"></div>
<svg class="i" style="left:170.2px;top:130.7px" width="27.6" height="27.6" viewBox="0 0 24 24"><path d="M7.500 3.500 V10.500 M13 16.500 H20.500" fill="none" stroke="#a6a6a6" stroke-width="1.300" stroke-linecap="round"/><path d="M5 6 L7.500 3.300 L10 6 M18.200 14 L20.800 16.500 L18.200 19" fill="none" stroke="#a6a6a6" stroke-width="1.300" stroke-linecap="round" stroke-linejoin="round"/><path d="M5.600 18.400 L3 21 M3 18.600 V21.200 H5.600" fill="none" stroke="#a6a6a6" stroke-width="1.100" stroke-linecap="round"/><circle cx="8" cy="16.300" r="2.700" fill="#d8d8d8"/></svg>
<span class="t" style="left:205px;top:133px;color:#e4e4e4;">Default</span>
<svg class="i" style="left:299px;top:137px" width="16" height="16" viewBox="-8 -8 16 16"><path d="M-4.3 -2.4 L0 2.4 L4.3 -2.4" fill="none" stroke="#d0d0d0" stroke-width="1.6" stroke-linecap="round" stroke-linejoin="round"/></svg>
<span class="t" style="left:340px;top:133px;color:#c4c4c4;">Drag:</span>
<div class="hbtn" style="left:397px;top:130px;width:124px;height:28.5px;"></div>
<span class="t" style="left:408px;top:133px;color:#e4e4e4;">Select Circl</span>
<svg class="i" style="left:504px;top:137px" width="16" height="16" viewBox="-8 -8 16 16"><path d="M-4.3 -2.4 L0 2.4 L4.3 -2.4" fill="none" stroke="#d0d0d0" stroke-width="1.6" stroke-linecap="round" stroke-linejoin="round"/></svg>
<div class="hbtn" style="left:1741px;top:130px;width:96px;height:28.5px;"></div>
<span class="t" style="left:1752px;top:133px;color:#e4e4e4;">Options</span>
<svg class="i" style="left:1821px;top:137px" width="16" height="16" viewBox="-8 -8 16 16"><path d="M-4.3 -2.4 L0 2.4 L4.3 -2.4" fill="none" stroke="#d0d0d0" stroke-width="1.6" stroke-linecap="round" stroke-linejoin="round"/></svg>
<div style="left:13px;top:175px;width:61px;height:102.0px;background:#252525;border-radius:6px;box-shadow:0 1px 3px rgba(0,0,0,.5);"></div>
<svg class="i" style="left:21.7px;top:180.15px" width="40" height="40" viewBox="0 0 40 40"><circle cx="20" cy="20" r="16" fill="none" stroke="#dcb96a" stroke-width="2.2" stroke-dasharray="5.200 3.180"/><path d="M15 11.500 L27.500 20.500 L20.800 22 L17.600 28.500 Z" fill="#e4e4e4"/></svg>
<svg class="i" style="left:64px;top:215.3px;" width="7" height="7" viewBox="0 0 7 7"><path d="M6 0.500 V6 H0.500 Z" fill="#8c8c8c"/></svg>
<div style="left:13px;top:225.3px;width:61px;height:1px;background:#3a3a3a;"></div>
<svg class="i" style="left:21.7px;top:231.15px" width="40" height="40" viewBox="0 0 40 40"><circle cx="20" cy="20" r="16" fill="none" stroke="#f4f4f4" stroke-width="2.500"/><circle cx="20" cy="20" r="16" fill="none" stroke="#b23c4c" stroke-width="2.500" stroke-dasharray="6.300 6.266" stroke-dashoffset="3"/><path d="M20 9.500 V16.500 M20 23.500 V30.500 M9.500 20 H16.500 M23.500 20 H30.500" stroke="#c8c8c8" stroke-width="1.500"/></svg>
<div style="left:13px;top:285.5px;width:61px;height:206.0px;background:#252525;border-radius:6px;box-shadow:0 1px 3px rgba(0,0,0,.5);"></div>
<div style="left:13px;top:285.5px;width:61px;height:50.8px;background:#4772b3;border-radius:6px 6px 0 0;"></div>
<svg class="i" style="left:21.7px;top:290.9px" width="40" height="40" viewBox="0 0 40 40"><path d="M20 3.500 L24.200 10 H15.800 Z M20 36.500 L24.200 30 H15.800 Z M3.500 20 L10 15.800 V24.200 Z M36.500 20 L30 15.800 V24.200 Z" fill="#ffffff"/><path d="M20 11.500 V15 M20 25 V28.500 M11.500 20 H15 M25 20 H28.500" stroke="#ffffff" stroke-width="2"/></svg>
<div style="left:13px;top:336.3px;width:61px;height:1px;background:#3a3a3a;"></div>
<svg class="i" style="left:21.7px;top:342.15000000000003px" width="40" height="40" viewBox="0 0 40 40"><path d="M7.500 13.500 A14.200 14.200 0 0 1 30 9.500" fill="none" stroke="#e4e4e4" stroke-width="1.700"/><path d="M32.500 26.500 A14.200 14.200 0 0 1 10 30.500" fill="none" stroke="#e4e4e4" stroke-width="1.700"/><path d="M3 18.500 H11.500 L7.300 25.500 Z M28.500 21.500 H37 L32.800 14.500 Z" fill="#e4e4e4"/><path d="M20 14.500 L25.500 20 L20 25.500 L14.500 20 Z" fill="#b4b4b4"/></svg>
<div style="left:13px;top:388.0px;width:61px;height:1px;background:#3a3a3a;"></div>
<svg class="i" style="left:21.7px;top:393.75px" width="40" height="40" viewBox="0 0 40 40"><rect x="7" y="19.500" width="12.500" height="12.500" fill="#e4e4e4"/><path d="M8 16.500 V8 H31.500 V31.500 H23" fill="none" stroke="#c4c4c4" stroke-width="1.600"/><path d="M21.500 18 L27.500 12" fill="none" stroke="#e4e4e4" stroke-width="2"/><path d="M23.500 10.500 H29.500 V16.500 Z" fill="#e4e4e4"/></svg>
<svg class="i" style="left:64px;top:429.5px;" width="7" height="7" viewBox="0 0 7 7"><path d="M6 0.500 V6 H0.500 Z" fill="#8c8c8c"/></svg>
<div style="left:13px;top:439.5px;width:61px;height:1px;background:#3a3a3a;"></div>
<svg class="i" style="left:21.7px;top:445.5px" width="40" height="40" viewBox="0 0 40 40"><rect x="14.200" y="14.200" width="11.600" height="11.600" fill="#e4e4e4"/><path d="M9.500 9.500 A14.800 14.800 0 0 1 15.500 5.900 M24.500 5.900 A14.800 14.800 0 0 1 30.500 9.500 A14.800 14.800 0 0 1 34.100 15.500 M34.100 24.500 A14.800 14.800 0 0 1 30.500 30.500 A14.800 14.800 0 0 1 24.500 34.100 M15.500 34.100 A14.800 14.800 0 0 1 9.500 30.500 A14.800 14.800 0 0 1 5.900 24.500 M5.900 15.500 A14.800 14.800 0 0 1 9.500 9.500" fill="none" stroke="#e4e4e4" stroke-width="1.600"/><path d="M20 3.500 L23.500 9.500 H16.500 Z M20 36.500 L23.500 30.500 H16.500 Z M3.500 20 L9.500 16.500 V23.500 Z M36.500 20 L30.500 16.500 V23.500 Z" fill="#e4e4e4"/></svg>
<div style="left:13px;top:501.1px;width:61px;height:101.5px;background:#252525;border-radius:6px;box-shadow:0 1px 3px rgba(0,0,0,.5);"></div>
<svg class="i" style="left:21.7px;top:506.05000000000007px" width="40" height="40" viewBox="0 0 40 40"><path d="M4.500 31 C9 35.500 14 33.500 18.500 29 C23 24.500 28 23.500 32.500 29.500" fill="none" stroke="#8fd0b0" stroke-width="2" stroke-linecap="round"/><path d="M4 29 L6 23 L25.500 4 L30.500 9.500 L11 28 Z" fill="#e4e4e4"/><path d="M22.500 7 L27.800 12.300" stroke="#252525" stroke-width="1.500"/><path d="M6 23 L11 28" stroke="#252525" stroke-width="1.200"/></svg>
<svg class="i" style="left:64px;top:541.0px;" width="7" height="7" viewBox="0 0 7 7"><path d="M6 0.500 V6 H0.500 Z" fill="#8c8c8c"/></svg>
<div style="left:13px;top:551.0px;width:61px;height:1px;background:#3a3a3a;"></div>
<svg class="i" style="left:21.7px;top:556.8px" width="40" height="40" viewBox="0 0 40 40"><path d="M15.500 33 V19.500 A13.500 13.500 0 0 1 29 33 Z" fill="#8fdcb4"/><path d="M15.500 16.500 A16.500 16.500 0 0 1 32 33" fill="none" stroke="#8fdcb4" stroke-width="1.400"/><path d="M7 3.500 H14.500 V31 H37 V37 H7 Z" fill="#e4e4e4"/><path d="M10.500 7 H14 M10.500 10 H14 M10.500 13 H14 M10.500 16 H14 M10.500 19 H14 M10.500 22 H14 M10.500 25 H14 M10.500 28 H14 M16 33.500 V36.500 M19 33.500 V36.500 M22 33.500 V36.500 M25 33.500 V36.500 M28 33.500 V36.500 M31 33.500 V36.500 M34 33.500 V36.500" stroke="#252525" stroke-width="1.100"/></svg>
<div style="left:13px;top:612px;width:61px;height:50.1px;background:#252525;border-radius:6px;box-shadow:0 1px 3px rgba(0,0,0,.5);"></div>
<svg class="i" style="left:21.7px;top:617.05px" width="40" height="40" viewBox="0 0 40 40"><path d="M9.500 17.500 H28 V36 H9.500 Z M9.500 17.500 L17 10.500 H35.500 L28 17.500 M35.500 10.500 V29 L28 36" fill="none" stroke="#8fd0b0" stroke-width="1.700" stroke-linejoin="round"/><path d="M7 2.500 V13 M1.800 7.700 H12.200" stroke="#8fd0b0" stroke-width="2.800"/></svg>
<svg class="i" style="left:64px;top:652.1px;" width="7" height="7" viewBox="0 0 7 7"><path d="M6 0.500 V6 H0.500 Z" fill="#8c8c8c"/></svg>
<span class="t sh" style="left:101px;top:175px;">User Perspective</span>
<span class="t sh" style="left:101px;top:202px;">(0) Collection | Cube.003</span>
<span class="t sh" style="left:101px;top:229px;">Rendering Done</span>
<svg class="i" style="left:0px;top:0px;" width="2239" height="1365" viewBox="0 0 2239 1365"><circle cx="1473.7" cy="206.2" r="10.8" fill="#74394a" fill-opacity="0.55" stroke="#b8485a" stroke-width="1.5"/><circle cx="1444.9" cy="208.8" r="12.2" fill="#3a5f99" fill-opacity="0.62" stroke="#4a8de0" stroke-width="1.6"/><circle cx="1483.4" cy="260.5" r="11.7" fill="#587a2a" fill-opacity="0.85" stroke="#8cc02c" stroke-width="1.5"/><line x1="1444.9" y1="236.7" x2="1444.9" y2="258" stroke="#3f7ad0" stroke-width="2.2"/><line x1="1444.9" y1="236.7" x2="1406.6" y2="213.7" stroke="#72a81c" stroke-width="2.6"/><line x1="1444.9" y1="236.7" x2="1416.3" y2="268" stroke="#e0405a" stroke-width="2.2"/><circle cx="1406.6" cy="213.7" r="11.6" fill="#6fa51a"/><circle cx="1444.9" cy="265.2" r="11.2" fill="#3a79c8"/><circle cx="1416.3" cy="268" r="12.4" fill="#ec3652"/><text x="1406.6" y="219.3" font-family="DejaVu Sans, Liberation Sans, sans-serif" font-size="14.8" text-anchor="middle" fill="#1d3206" stroke="#1d3206" stroke-width="0.8" stroke-linejoin="round">Y</text><text x="1444.9" y="270.8" font-family="DejaVu Sans, Liberation Sans, sans-serif" font-size="14.8" text-anchor="middle" fill="#0a1f4a" stroke="#0a1f4a" stroke-width="0.8" stroke-linejoin="round">Z</text><text x="1416.3" y="273.6" font-family="DejaVu Sans, Liberation Sans, sans-serif" font-size="14.8" text-anchor="middle" fill="#4a0612" stroke="#4a0612" stroke-width="0.8" stroke-linejoin="round">X</text></svg>
<div style="left:1465px;top:298px;width:42px;height:42px;background:#333333;border-radius:50%;"></div>
<svg class="i" style="left:1472px;top:305px" width="28" height="28" viewBox="0 0 28 28"><circle cx="16.300" cy="12.600" r="9.600" fill="#e4e4e4"/><path d="M9.700 19.600 L4 24.800" stroke="#e4e4e4" stroke-width="3.200" stroke-linecap="round"/><path d="M16.300 8 V17.200 M11.700 12.600 H20.900" stroke="#333" stroke-width="1.500"/></svg>
<div style="left:1465px;top:343px;width:42px;height:42px;background:#333333;border-radius:50%;"></div>
<svg class="i" style="left:1472px;top:350px" width="28" height="28" viewBox="0 0 28 28"><path d="M9.500 25.500 C6.500 23 4 19.500 2.500 16 C2 14.300 4 13.300 5.500 14.800 L8.200 17.500 L7.200 7.500 C7 5.300 9.800 5 10.200 7.200 L11.400 13 H12 L11.800 4.500 C11.800 2.300 14.700 2.300 14.800 4.500 L15 13 H15.700 L16.800 6 C17.200 3.800 19.900 4.300 19.600 6.500 L18.800 13.800 H19.400 L21.600 9.800 C22.600 8 25 9.200 24.200 11.200 L21 19.500 C20 22.500 18.500 24.500 16.500 25.800 Q13 27 9.500 25.500 Z" fill="#e4e4e4"/></svg>
<div style="left:1465px;top:388px;width:42px;height:42px;background:#333333;border-radius:50%;"></div>
<svg class="i" style="left:1472px;top:395px" width="28" height="28" viewBox="0 0 28 28"><circle cx="8.500" cy="8" r="4" fill="#e4e4e4"/><circle cx="17.500" cy="7.500" r="4.600" fill="#e4e4e4"/><circle cx="8.500" cy="8" r="1.500" fill="#2a2a2a"/><circle cx="17.500" cy="7.500" r="1.800" fill="#2a2a2a"/><rect x="5" y="12.500" width="16" height="10" rx="1.500" fill="#e4e4e4"/><path d="M21.500 16 L26 13.500 V21.500 L21.500 19 Z" fill="#e4e4e4"/><rect x="8" y="22.500" width="4" height="2.500" fill="#e4e4e4"/></svg>
<div style="left:1465px;top:433px;width:42px;height:42px;background:#333333;border-radius:50%;"></div>
<svg class="i" style="left:1472px;top:440px" width="28" height="28" viewBox="0 0 28 28"><path d="M7.500 5 H20.500 L25.500 23.500 H2.500 Z" fill="none" stroke="#e4e4e4" stroke-width="1.800" stroke-linejoin="round"/><path d="M11.800 5 L10 23.500 M16.200 5 L18 23.500 M6 10.500 H22 M4.500 16.500 H23.500" stroke="#e4e4e4" stroke-width="1.600"/></svg>
<div style="left:1819px;top:162px;width:30px;height:1076px;background:#1b1b1b;border-radius:0 0 6px 0;"></div>
<div style="left:1819px;top:170px;width:27.3px;height:58px;background:#2f2f2f;border:1px solid #323232;border-left:none;border-radius:0 6px 6px 0;"></div>
<span class="t" style="left:1832.6px;top:198.2px;width:0;height:0;color:#f0f0f0;"><span class="t" style="left:0;top:0;transform:translate(-50%,-50%) rotate(-90deg);">Item</span></span>
<div style="left:1819px;top:234px;width:27.3px;height:55px;background:#1e1e1e;border:1px solid #323232;border-left:none;border-radius:0 6px 6px 0;"></div>
<span class="t" style="left:1832.6px;top:260.7px;width:0;height:0;color:#c8c8c8;"><span class="t" style="left:0;top:0;transform:translate(-50%,-50%) rotate(-90deg);">Tool</span></span>
<div style="left:1819px;top:296px;width:27.3px;height:59px;background:#1e1e1e;border:1px solid #323232;border-left:none;border-radius:0 6px 6px 0;"></div>
<span class="t" style="left:1832.6px;top:324.7px;width:0;height:0;color:#c8c8c8;"><span class="t" style="left:0;top:0;transform:translate(-50%,-50%) rotate(-90deg);">View</span></span>
<div style="left:1819px;top:362px;width:27.3px;height:61px;background:#1e1e1e;border:1px solid #323232;border-left:none;border-radius:0 6px 6px 0;"></div>
<span class="t" style="left:1832.6px;top:391.7px;width:0;height:0;color:#c8c8c8;"><span class="t" style="left:0;top:0;transform:translate(-50%,-50%) rotate(-90deg);">MMD</span></span>
<div style="left:1532px;top:165px;width:276px;height:582px;background:rgba(61,61,61,.96);border-radius:6px;"></div>
<svg class="i" style="left:1543px;top:175px;" width="16" height="16" viewBox="0 0 16 16"><path d="M2.500 5 L8 10.500 L13.500 5" fill="none" stroke="#b8b8b8" stroke-width="1.4" stroke-linecap="round" stroke-linejoin="round"/></svg>
<span class="t" style="left:1565px;top:173px;color:#ececec;">Transform</span>
<svg class="i" style="left:1782px;top:181px;" width="16" height="8" viewBox="0 0 16 8"><rect x="0" y="0" width="2" height="2" fill="#8a8a8a"/><rect x="0" y="4" width="2" height="2" fill="#8a8a8a"/><rect x="4" y="0" width="2" height="2" fill="#8a8a8a"/><rect x="4" y="4" width="2" height="2" fill="#8a8a8a"/><rect x="8" y="0" width="2" height="2" fill="#8a8a8a"/><rect x="8" y="4" width="2" height="2" fill="#8a8a8a"/><rect x="12" y="0" width="2" height="2" fill="#8a8a8a"/><rect x="12" y="4" width="2" height="2" fill="#8a8a8a"/></svg>
<span class="t" style="left:1545px;top:218px;color:#d0d0d0;">Location:</span>
<div style="left:1545px;top:245px;width:190px;height:28.5px;background:#545454;border-radius:6px 6px 0 0;"></div>
<span class="t" style="left:1568px;top:248px;color:#e6e6e6;">X</span>
<span class="t" style="right:525px;top:248px;color:#e6e6e6;">-0.10223 m</span>
<svg class="i" style="left:1760.5px;top:248.3px" width="23" height="23" viewBox="0 0 20 20"><path d="M2.2 9.5 V6.2 Q2.2 2.4 5.7 2.4 Q9.2 2.4 9.2 6.2 V9.8" fill="none" stroke="#a4a4a4" stroke-width="1.5" stroke-linecap="round"/><rect x="7.2" y="9.8" width="11" height="7.4" fill="none" stroke="#a4a4a4" stroke-width="1.5"/><rect x="12" y="12" width="1.6" height="3" fill="#a4a4a4"/></svg>
<div style="left:1545px;top:274.5px;width:190px;height:28.5px;background:#545454;border-radius:0;"></div>
<span class="t" style="left:1568px;top:277.5px;color:#e6e6e6;">Y</span>
<span class="t" style="right:525px;top:277.5px;color:#e6e6e6;">0 m</span>
<svg class="i" style="left:1760.5px;top:277.8px" width="23" height="23" viewBox="0 0 20 20"><path d="M2.2 9.5 V6.2 Q2.2 2.4 5.7 2.4 Q9.2 2.4 9.2 6.2 V9.8" fill="none" stroke="#a4a4a4" stroke-width="1.5" stroke-linecap="round"/><rect x="7.2" y="9.8" width="11" height="7.4" fill="none" stroke="#a4a4a4" stroke-width="1.5"/><rect x="12" y="12" width="1.6" height="3" fill="#a4a4a4"/></svg>
<div style="left:1545px;top:304px;width:190px;height:28.5px;background:#545454;border-radius:0 0 6px 6px;"></div>
<span class="t" style="left:1568px;top:307px;color:#e6e6e6;">Z</span>
<span class="t" style="right:525px;top:307px;color:#e6e6e6;">0.044703 m</span>
<svg class="i" style="left:1760.5px;top:307.3px" width="23" height="23" viewBox="0 0 20 20"><path d="M2.2 9.5 V6.2 Q2.2 2.4 5.7 2.4 Q9.2 2.4 9.2 6.2 V9.8" fill="none" stroke="#a4a4a4" stroke-width="1.5" stroke-linecap="round"/><rect x="7.2" y="9.8" width="11" height="7.4" fill="none" stroke="#a4a4a4" stroke-width="1.5"/><rect x="12" y="12" width="1.6" height="3" fill="#a4a4a4"/></svg>
<span class="t" style="left:1545px;top:341px;color:#d0d0d0;">Rotation:</span>
<div style="left:1545px;top:368px;width:190px;height:28.5px;background:#545454;border-radius:6px 6px 0 0;"></div>
<span class="t" style="left:1568px;top:371px;color:#e6e6e6;">X</span>
<span class="t" style="right:525px;top:371px;color:#e6e6e6;">0°</span>
<svg class="i" style="left:1760.5px;top:371.3px" width="23" height="23" viewBox="0 0 20 20"><path d="M2.2 9.5 V6.2 Q2.2 2.4 5.7 2.4 Q9.2 2.4 9.2 6.2 V9.8" fill="none" stroke="#a4a4a4" stroke-width="1.5" stroke-linecap="round"/><rect x="7.2" y="9.8" width="11" height="7.4" fill="none" stroke="#a4a4a4" stroke-width="1.5"/><rect x="12" y="12" width="1.6" height="3" fill="#a4a4a4"/></svg>
<div style="left:1545px;top:397.5px;width:190px;height:28.5px;background:#545454;border-radius:0;"></div>
<span class="t" style="left:1568px;top:400.5px;color:#e6e6e6;">Y</span>
<span class="t" style="right:525px;top:400.5px;color:#e6e6e6;">0°</span>
<svg class="i" style="left:1760.5px;top:400.8px" width="23" height="23" viewBox="0 0 20 20"><path d="M2.2 9.5 V6.2 Q2.2 2.4 5.7 2.4 Q9.2 2.4 9.2 6.2 V9.8" fill="none" stroke="#a4a4a4" stroke-width="1.5" stroke-linecap="round"/><rect x="7.2" y="9.8" width="11" height="7.4" fill="none" stroke="#a4a4a4" stroke-width="1.5"/><rect x="12" y="12" width="1.6" height="3" fill="#a4a4a4"/></svg>
<div style="left:1545px;top:427px;width:190px;height:28.5px;background:#545454;border-radius:0 0 6px 6px;"></div>
<span class="t" style="left:1568px;top:430px;color:#e6e6e6;">Z</span>
<span class="t" style="right:525px;top:430px;color:#e6e6e6;">0°</span>
<svg class="i" style="left:1760.5px;top:430.3px" width="23" height="23" viewBox="0 0 20 20"><path d="M2.2 9.5 V6.2 Q2.2 2.4 5.7 2.4 Q9.2 2.4 9.2 6.2 V9.8" fill="none" stroke="#a4a4a4" stroke-width="1.5" stroke-linecap="round"/><rect x="7.2" y="9.8" width="11" height="7.4" fill="none" stroke="#a4a4a4" stroke-width="1.5"/><rect x="12" y="12" width="1.6" height="3" fill="#a4a4a4"/></svg>
<div style="left:1545px;top:461px;width:250px;height:28px;background:#282828;border:1px solid #333;border-radius:6px;"></div>
<span class="t" style="left:1556px;top:464px;color:#e6e6e6;">XYZ Euler</span>
<svg class="i" style="left:1777px;top:468px" width="16" height="16" viewBox="-8 -8 16 16"><path d="M-4.3 -2.4 L0 2.4 L4.3 -2.4" fill="none" stroke="#d0d0d0" stroke-width="1.6" stroke-linecap="round" stroke-linejoin="round"/></svg>
<span class="t" style="left:1545px;top:497px;color:#d0d0d0;">Scale:</span>
<div style="left:1545px;top:524px;width:190px;height:28.5px;background:#545454;border-radius:6px 6px 0 0;"></div>
<span class="t" style="left:1568px;top:527px;color:#e6e6e6;">X</span>
<span class="t" style="right:525px;top:527px;color:#e6e6e6;">0.250</span>
<svg class="i" style="left:1760.5px;top:527.3px" width="23" height="23" viewBox="0 0 20 20"><path d="M2.2 9.5 V6.2 Q2.2 2.4 5.7 2.4 Q9.2 2.4 9.2 6.2 V9.8" fill="none" stroke="#a4a4a4" stroke-width="1.5" stroke-linecap="round"/><rect x="7.2" y="9.8" width="11" height="7.4" fill="none" stroke="#a4a4a4" stroke-width="1.5"/><rect x="12" y="12" width="1.6" height="3" fill="#a4a4a4"/></svg>
<div style="left:1545px;top:553.5px;width:190px;height:28.5px;background:#545454;border-radius:0;"></div>
<span class="t" style="left:1568px;top:556.5px;color:#e6e6e6;">Y</span>
<span class="t" style="right:525px;top:556.5px;color:#e6e6e6;">0.250</span>
<svg class="i" style="left:1760.5px;top:556.8px" width="23" height="23" viewBox="0 0 20 20"><path d="M2.2 9.5 V6.2 Q2.2 2.4 5.7 2.4 Q9.2 2.4 9.2 6.2 V9.8" fill="none" stroke="#a4a4a4" stroke-width="1.5" stroke-linecap="round"/><rect x="7.2" y="9.8" width="11" height="7.4" fill="none" stroke="#a4a4a4" stroke-width="1.5"/><rect x="12" y="12" width="1.6" height="3" fill="#a4a4a4"/></svg>
<div style="left:1545px;top:583px;width:190px;height:28.5px;background:#545454;border-radius:0 0 6px 6px;"></div>
<span class="t" style="left:1568px;top:586px;color:#e6e6e6;">Z</span>
<span class="t" style="right:525px;top:586px;color:#e6e6e6;">0.120</span>
<svg class="i" style="left:1760.5px;top:586.3px" width="23" height="23" viewBox="0 0 20 20"><path d="M2.2 9.5 V6.2 Q2.2 2.4 5.7 2.4 Q9.2 2.4 9.2 6.2 V9.8" fill="none" stroke="#a4a4a4" stroke-width="1.5" stroke-linecap="round"/><rect x="7.2" y="9.8" width="11" height="7.4" fill="none" stroke="#a4a4a4" stroke-width="1.5"/><rect x="12" y="12" width="1.6" height="3" fill="#a4a4a4"/></svg>
<span class="t" style="left:1545px;top:620px;color:#d0d0d0;">Dimensions:</span>
<div style="left:1545px;top:647px;width:250px;height:28.5px;background:#545454;border-radius:6px 6px 0 0;"></div>
<span class="t" style="left:1568px;top:650px;color:#e6e6e6;">X</span>
<span class="t" style="right:465px;top:650px;color:#e6e6e6;">0.5 m</span>
<div style="left:1545px;top:676.5px;width:250px;height:28.5px;background:#545454;border-radius:0;"></div>
<span class="t" style="left:1568px;top:679.5px;color:#e6e6e6;">Y</span>
<span class="t" style="right:465px;top:679.5px;color:#e6e6e6;">0.5 m</span>
<div style="left:1545px;top:706px;width:250px;height:28.5px;background:#545454;border-radius:0 0 6px 6px;"></div>
<span class="t" style="left:1568px;top:709px;color:#e6e6e6;">Z</span>
<span class="t" style="right:465px;top:709px;color:#e6e6e6;">0.24 m</span>
<div style="left:1852px;top:85px;width:387px;height:399px;background:#282828;border-radius:6px;"></div>
<div style="left:1852px;top:85px;width:387px;height:38px;background:#2c2c2c;border-radius:6px 6px 0 0;"></div>
<div class="btn" style="left:1864px;top:90px;width:47.5px;height:28.5px;"></div>
<svg class="i" style="left:1867px;top:91px" width="27" height="27" viewBox="0 0 24 24"><rect x="3" y="2.500" width="7" height="4" fill="#d8d8d8"/><rect x="12" y="10" width="9.500" height="4" fill="#d8d8d8"/><rect x="12" y="16.800" width="9.500" height="4" fill="#d8d8d8"/><path d="M6.500 6.500 V19 H12 M6.500 12 H12" fill="none" stroke="#a8a8a8" stroke-width="1.300"/></svg>
<svg class="i" style="left:1894px;top:97px" width="16" height="16" viewBox="-8 -8 16 16"><path d="M-4.3 -2.4 L0 2.4 L4.3 -2.4" fill="none" stroke="#d0d0d0" stroke-width="1.6" stroke-linecap="round" stroke-linejoin="round"/></svg>
<div class="btn" style="left:1919px;top:90px;width:48px;height:28.5px;"></div>
<svg class="i" style="left:1922.5px;top:92px" width="25" height="25" viewBox="0 0 20 20"><path d="M2.5 8 V17.5 H13" fill="none" stroke="#d6d6d6" stroke-width="1.2"/><path d="M4.7 5.8 V15.3 H15.2" fill="none" stroke="#d6d6d6" stroke-width="1.2"/><rect x="7" y="2.6" width="11" height="10.6" fill="#282828" stroke="#d6d6d6" stroke-width="1.4"/><path d="M8.2 12 L11.6 6.4 L14.4 10.4 L15.4 9.2 L17 12 Z" fill="#d6d6d6"/><circle cx="15.3" cy="5.4" r="1.1" fill="#d6d6d6"/></svg>
<svg class="i" style="left:1949px;top:97px" width="16" height="16" viewBox="-8 -8 16 16"><path d="M-4.3 -2.4 L0 2.4 L4.3 -2.4" fill="none" stroke="#d0d0d0" stroke-width="1.6" stroke-linecap="round" stroke-linejoin="round"/></svg>
<div style="left:1990px;top:89.5px;width:174.5px;height:29.5px;background:#1d1d1d;border:1px solid #3a3a3a;border-radius:6px;"></div>
<svg class="i" style="left:1996px;top:91.5px" width="25" height="25" viewBox="0 0 20 20"><circle cx="12" cy="8" r="5.3" fill="none" stroke="#d0d0d0" stroke-width="1.6"/><path d="M8.2 11.8 L2.4 17.6" stroke="#d0d0d0" stroke-width="1.9" stroke-linecap="round"/></svg>
<div class="btn" style="left:2188px;top:90px;width:60px;height:28.5px;"></div>
<svg class="i" style="left:2190px;top:91.5px" width="27" height="27" viewBox="0 0 24 24"><path d="M3 3.500 H21 L14.200 12.500 V18.500 L9.800 21.500 V12.500 Z" fill="none" stroke="#d8d8d8" stroke-width="1.500" stroke-linejoin="round"/></svg>
<svg class="i" style="left:2218px;top:97px" width="16" height="16" viewBox="-8 -8 16 16"><path d="M-4.3 -2.4 L0 2.4 L4.3 -2.4" fill="none" stroke="#d0d0d0" stroke-width="1.6" stroke-linecap="round" stroke-linejoin="round"/></svg>
<div style="left:1852px;top:123px;width:387px;height:361px;overflow:hidden;border-radius:0 0 6px 6px;"><div style="left:0px;top:31.80000000000001px;width:387px;height:30px;background:#2a2a2a;"></div><div style="left:0px;top:61.80000000000001px;width:387px;height:30px;background:#334d80;"></div><div style="left:0px;top:91.80000000000001px;width:387px;height:30px;background:#2a2a2a;"></div><div style="left:0px;top:151.8px;width:387px;height:30px;background:#2a2a2a;"></div><div style="left:0px;top:211.8px;width:387px;height:30px;background:#2a2a2a;"></div><div style="left:0px;top:271.8px;width:387px;height:30px;background:#2a2a2a;"></div><div style="left:0px;top:331.8px;width:387px;height:30px;background:#2a2a2a;"></div></div>
<svg class="i" style="left:0;top:0" width="2239" height="484" viewBox="0 0 2239 484"><line x1="1896.5" y1="123" x2="1896.5" y2="484" stroke="#4a4a4a" stroke-width="1"/><path d="M1922.5 136.0 L1931.5 140.5 L1922.5 145.0 Z" fill="#8c8c8c"/><path d="M1922.5 166.0 L1931.5 170.5 L1922.5 175.0 Z" fill="#8c8c8c"/><path d="M1922.5 196.0 L1931.5 200.5 L1922.5 205.0 Z" fill="#e6e6e6"/><path d="M1922.5 226.0 L1931.5 230.5 L1922.5 235.0 Z" fill="#e6e6e6"/><path d="M1922.5 256.0 L1931.5 260.5 L1922.5 265.0 Z" fill="#8c8c8c"/><path d="M1922.5 286.0 L1931.5 290.5 L1922.5 295.0 Z" fill="#8c8c8c"/><path d="M1922.5 316.0 L1931.5 320.5 L1922.5 325.0 Z" fill="#8c8c8c"/><path d="M1922.5 346.0 L1931.5 350.5 L1922.5 355.0 Z" fill="#8c8c8c"/><path d="M1922.5 376.0 L1931.5 380.5 L1922.5 385.0 Z" fill="#8c8c8c"/><path d="M1922.5 406.0 L1931.5 410.5 L1922.5 415.0 Z" fill="#8c8c8c"/><path d="M1922.5 436.0 L1931.5 440.5 L1922.5 445.0 Z" fill="#8c8c8c"/><path d="M1922.5 466.0 L1931.5 470.5 L1922.5 475.0 Z" fill="#8c8c8c"/></svg>
<svg class="i" style="left:1945px;top:128.0px" width="24.6" height="24.6" viewBox="0 0 20 20"><path d="M3.400 3.800 H16.600 L10 16.800 Z" fill="none" stroke="#8e6040" stroke-width="3.700" stroke-linejoin="round"/></svg>
<span class="t" style="left:1978px;top:130.4px;color:#8c8c8c;">Cube.001</span>
<svg class="i" style="left:2086.8px;top:128.4px" width="23.4" height="23.4" viewBox="0 0 20 20"><path d="M4 4 H16 L10 16.500 Z" fill="none" stroke="#167e62" stroke-width="1.400"/><rect x="2" y="2" width="4" height="4" fill="#282828" stroke="#167e62" stroke-width="1.300"/><rect x="14" y="2" width="4" height="4" fill="#282828" stroke="#167e62" stroke-width="1.300"/><rect x="8" y="14.300" width="4" height="4" fill="#282828" stroke="#167e62" stroke-width="1.300"/></svg>
<svg class="i" style="left:2169.7px;top:129.3px" width="21" height="21" viewBox="0 0 20 20"><path d="M1 7.500 Q10 18.500 19 7.500" fill="none" stroke="#a0a0a0" stroke-width="1.500" stroke-linecap="round"/></svg>
<svg class="i" style="left:2199.2px;top:128.8px" width="22" height="22" viewBox="0 0 20 20"><path d="M1 5.500 Q1 4.300 2.200 4.300 H5.300 L6.800 2 H13.200 L14.700 4.300 H17.800 Q19 4.300 19 5.500 V16 Q19 17.200 17.800 17.200 H2.200 Q1 17.200 1 16 Z" fill="#dcdcdc"/><circle cx="10" cy="10.400" r="4.900" fill="#282828"/><circle cx="10" cy="10.400" r="3.500" fill="#dcdcdc"/><circle cx="10" cy="10.400" r="2.100" fill="#282828"/></svg>
<svg class="i" style="left:1945px;top:158.0px" width="24.6" height="24.6" viewBox="0 0 20 20"><path d="M3.400 3.800 H16.600 L10 16.800 Z" fill="none" stroke="#8e6040" stroke-width="3.700" stroke-linejoin="round"/></svg>
<span class="t" style="left:1978px;top:160.4px;color:#8c8c8c;">Cube.002</span>
<svg class="i" style="left:2086.8px;top:158.4px" width="23.4" height="23.4" viewBox="0 0 20 20"><path d="M4 4 H16 L10 16.500 Z" fill="none" stroke="#167e62" stroke-width="1.400"/><rect x="2" y="2" width="4" height="4" fill="#282828" stroke="#167e62" stroke-width="1.300"/><rect x="14" y="2" width="4" height="4" fill="#282828" stroke="#167e62" stroke-width="1.300"/><rect x="8" y="14.300" width="4" height="4" fill="#282828" stroke="#167e62" stroke-width="1.300"/></svg>
<svg class="i" style="left:2169.7px;top:159.3px" width="21" height="21" viewBox="0 0 20 20"><path d="M1 7.500 Q10 18.500 19 7.500" fill="none" stroke="#a0a0a0" stroke-width="1.500" stroke-linecap="round"/></svg>
<svg class="i" style="left:2199.2px;top:158.8px" width="22" height="22" viewBox="0 0 20 20"><path d="M1 5.500 Q1 4.300 2.200 4.300 H5.300 L6.800 2 H13.200 L14.700 4.300 H17.800 Q19 4.300 19 5.500 V16 Q19 17.200 17.800 17.200 H2.200 Q1 17.200 1 16 Z" fill="#dcdcdc"/><circle cx="10" cy="10.400" r="4.900" fill="#282828"/><circle cx="10" cy="10.400" r="3.500" fill="#dcdcdc"/><circle cx="10" cy="10.400" r="2.100" fill="#282828"/></svg>
<div style="left:1942.5px;top:186.3px;width:29.5px;height:28px;background:rgba(255,255,255,.2);border:1px solid rgba(255,255,255,.28);border-radius:6px;"></div>
<svg class="i" style="left:1945px;top:188.0px" width="24.6" height="24.6" viewBox="0 0 20 20"><path d="M3.400 3.800 H16.600 L10 16.800 Z" fill="none" stroke="#e6924e" stroke-width="3.700" stroke-linejoin="round"/></svg>
<span class="t" style="left:1978px;top:190.4px;color:#f0a83c;">Cube.003</span>
<svg class="i" style="left:2086.8px;top:188.4px" width="23.4" height="23.4" viewBox="0 0 20 20"><path d="M4 4 H16 L10 16.500 Z" fill="none" stroke="#2ccfc0" stroke-width="1.400"/><rect x="2" y="2" width="4" height="4" fill="#334d80" stroke="#2ccfc0" stroke-width="1.300"/><rect x="14" y="2" width="4" height="4" fill="#334d80" stroke="#2ccfc0" stroke-width="1.300"/><rect x="8" y="14.300" width="4" height="4" fill="#334d80" stroke="#2ccfc0" stroke-width="1.300"/></svg>
<svg class="i" style="left:2169.7px;top:188.8px" width="21" height="21" viewBox="0 0 20 20"><path d="M0.500 10 Q10 -1.500 19.500 10 Q10 21.500 0.500 10 Z" fill="#f0f0f0"/><circle cx="10" cy="10" r="4.600" fill="#334d80"/><circle cx="10" cy="10" r="2.100" fill="#f0f0f0"/></svg>
<svg class="i" style="left:2199.2px;top:188.8px" width="22" height="22" viewBox="0 0 20 20"><path d="M1 5.500 Q1 4.300 2.200 4.300 H5.300 L6.800 2 H13.200 L14.700 4.300 H17.800 Q19 4.300 19 5.500 V16 Q19 17.200 17.800 17.200 H2.200 Q1 17.200 1 16 Z" fill="#e8e8e8"/><circle cx="10" cy="10.400" r="4.900" fill="#334d80"/><circle cx="10" cy="10.400" r="3.500" fill="#e8e8e8"/><circle cx="10" cy="10.400" r="2.100" fill="#334d80"/></svg>
<svg class="i" style="left:1945px;top:218.0px" width="24.6" height="24.6" viewBox="0 0 20 20"><path d="M3.400 3.800 H16.600 L10 16.800 Z" fill="none" stroke="#e6924e" stroke-width="3.700" stroke-linejoin="round"/></svg>
<span class="t" style="left:1978px;top:220.4px;color:#dcdcdc;">Cube.004</span>
<svg class="i" style="left:2086.8px;top:218.4px" width="23.4" height="23.4" viewBox="0 0 20 20"><path d="M4 4 H16 L10 16.500 Z" fill="none" stroke="#20bc96" stroke-width="1.400"/><rect x="2" y="2" width="4" height="4" fill="#282828" stroke="#20bc96" stroke-width="1.300"/><rect x="14" y="2" width="4" height="4" fill="#282828" stroke="#20bc96" stroke-width="1.300"/><rect x="8" y="14.300" width="4" height="4" fill="#282828" stroke="#20bc96" stroke-width="1.300"/></svg>
<svg class="i" style="left:2169.7px;top:218.8px" width="21" height="21" viewBox="0 0 20 20"><path d="M0.500 10 Q10 -1.500 19.500 10 Q10 21.500 0.500 10 Z" fill="#f0f0f0"/><circle cx="10" cy="10" r="4.600" fill="#282828"/><circle cx="10" cy="10" r="2.100" fill="#f0f0f0"/></svg>
<svg class="i" style="left:2199.2px;top:218.8px" width="22" height="22" viewBox="0 0 20 20"><path d="M1 5.500 Q1 4.300 2.200 4.300 H5.300 L6.800 2 H13.200 L14.700 4.300 H17.800 Q19 4.300 19 5.500 V16 Q19 17.200 17.800 17.200 H2.200 Q1 17.200 1 16 Z" fill="#e8e8e8"/><circle cx="10" cy="10.400" r="4.900" fill="#282828"/><circle cx="10" cy="10.400" r="3.500" fill="#e8e8e8"/><circle cx="10" cy="10.400" r="2.100" fill="#282828"/></svg>
<svg class="i" style="left:1945px;top:248.0px" width="24.6" height="24.6" viewBox="0 0 20 20"><path d="M3.400 3.800 H16.600 L10 16.800 Z" fill="none" stroke="#8e6040" stroke-width="3.700" stroke-linejoin="round"/></svg>
<span class="t" style="left:1978px;top:250.40000000000003px;color:#8c8c8c;">Cylinder</span>
<svg class="i" style="left:2075.3px;top:248.4px" width="23.4" height="23.4" viewBox="0 0 20 20"><path d="M4 4 H16 L10 16.500 Z" fill="none" stroke="#167e62" stroke-width="1.400"/><rect x="2" y="2" width="4" height="4" fill="#282828" stroke="#167e62" stroke-width="1.300"/><rect x="14" y="2" width="4" height="4" fill="#282828" stroke="#167e62" stroke-width="1.300"/><rect x="8" y="14.300" width="4" height="4" fill="#282828" stroke="#167e62" stroke-width="1.300"/></svg>
<svg class="i" style="left:2169.7px;top:249.3px" width="21" height="21" viewBox="0 0 20 20"><path d="M1 7.500 Q10 18.500 19 7.500" fill="none" stroke="#a0a0a0" stroke-width="1.500" stroke-linecap="round"/></svg>
<svg class="i" style="left:2199.2px;top:248.8px" width="22" height="22" viewBox="0 0 20 20"><path d="M1 5.500 Q1 4.300 2.200 4.300 H5.300 L6.800 2 H13.200 L14.700 4.300 H17.800 Q19 4.300 19 5.500 V16 Q19 17.200 17.800 17.200 H2.200 Q1 17.200 1 16 Z" fill="#dcdcdc"/><circle cx="10" cy="10.400" r="4.900" fill="#282828"/><circle cx="10" cy="10.400" r="3.500" fill="#dcdcdc"/><circle cx="10" cy="10.400" r="2.100" fill="#282828"/></svg>
<svg class="i" style="left:1945px;top:278.0px" width="24.6" height="24.6" viewBox="0 0 20 20"><path d="M3.400 3.800 H16.600 L10 16.800 Z" fill="none" stroke="#8e6040" stroke-width="3.700" stroke-linejoin="round"/></svg>
<span class="t" style="left:1978px;top:280.40000000000003px;color:#8c8c8c;">Cylinder.001</span>
<svg class="i" style="left:2110.3px;top:278.40000000000003px" width="23.4" height="23.4" viewBox="0 0 20 20"><path d="M4 4 H16 L10 16.500 Z" fill="none" stroke="#167e62" stroke-width="1.400"/><rect x="2" y="2" width="4" height="4" fill="#282828" stroke="#167e62" stroke-width="1.300"/><rect x="14" y="2" width="4" height="4" fill="#282828" stroke="#167e62" stroke-width="1.300"/><rect x="8" y="14.300" width="4" height="4" fill="#282828" stroke="#167e62" stroke-width="1.300"/></svg>
<svg class="i" style="left:2169.7px;top:279.3px" width="21" height="21" viewBox="0 0 20 20"><path d="M1 7.500 Q10 18.500 19 7.500" fill="none" stroke="#a0a0a0" stroke-width="1.500" stroke-linecap="round"/></svg>
<svg class="i" style="left:2199.2px;top:278.8px" width="22" height="22" viewBox="0 0 20 20"><path d="M1 5.500 Q1 4.300 2.200 4.300 H5.300 L6.800 2 H13.200 L14.700 4.300 H17.800 Q19 4.300 19 5.500 V16 Q19 17.200 17.800 17.200 H2.200 Q1 17.200 1 16 Z" fill="#dcdcdc"/><circle cx="10" cy="10.400" r="4.900" fill="#282828"/><circle cx="10" cy="10.400" r="3.500" fill="#dcdcdc"/><circle cx="10" cy="10.400" r="2.100" fill="#282828"/></svg>
<svg class="i" style="left:1945px;top:308.0px" width="24.6" height="24.6" viewBox="0 0 20 20"><path d="M3.400 3.800 H16.600 L10 16.800 Z" fill="none" stroke="#8e6040" stroke-width="3.700" stroke-linejoin="round"/></svg>
<span class="t" style="left:1978px;top:310.40000000000003px;color:#8c8c8c;">Cylinder.002</span>
<svg class="i" style="left:2110.3px;top:308.40000000000003px" width="23.4" height="23.4" viewBox="0 0 20 20"><path d="M4 4 H16 L10 16.500 Z" fill="none" stroke="#167e62" stroke-width="1.400"/><rect x="2" y="2" width="4" height="4" fill="#282828" stroke="#167e62" stroke-width="1.300"/><rect x="14" y="2" width="4" height="4" fill="#282828" stroke="#167e62" stroke-width="1.300"/><rect x="8" y="14.300" width="4" height="4" fill="#282828" stroke="#167e62" stroke-width="1.300"/></svg>
<svg class="i" style="left:2169.7px;top:309.3px" width="21" height="21" viewBox="0 0 20 20"><path d="M1 7.500 Q10 18.500 19 7.500" fill="none" stroke="#a0a0a0" stroke-width="1.500" stroke-linecap="round"/></svg>
<svg class="i" style="left:2199.2px;top:308.8px" width="22" height="22" viewBox="0 0 20 20"><path d="M1 5.500 Q1 4.300 2.200 4.300 H5.300 L6.800 2 H13.200 L14.700 4.300 H17.800 Q19 4.300 19 5.500 V16 Q19 17.200 17.800 17.200 H2.200 Q1 17.200 1 16 Z" fill="#dcdcdc"/><circle cx="10" cy="10.400" r="4.900" fill="#282828"/><circle cx="10" cy="10.400" r="3.500" fill="#dcdcdc"/><circle cx="10" cy="10.400" r="2.100" fill="#282828"/></svg>
<svg class="i" style="left:1945px;top:338.0px" width="24.6" height="24.6" viewBox="0 0 20 20"><path d="M3.400 3.800 H16.600 L10 16.800 Z" fill="none" stroke="#8e6040" stroke-width="3.700" stroke-linejoin="round"/></svg>
<span class="t" style="left:1978px;top:340.40000000000003px;color:#8c8c8c;">Cylinder.003</span>
<svg class="i" style="left:2110.3px;top:338.40000000000003px" width="23.4" height="23.4" viewBox="0 0 20 20"><path d="M4 4 H16 L10 16.500 Z" fill="none" stroke="#167e62" stroke-width="1.400"/><rect x="2" y="2" width="4" height="4" fill="#282828" stroke="#167e62" stroke-width="1.300"/><rect x="14" y="2" width="4" height="4" fill="#282828" stroke="#167e62" stroke-width="1.300"/><rect x="8" y="14.300" width="4" height="4" fill="#282828" stroke="#167e62" stroke-width="1.300"/></svg>
<svg class="i" style="left:2169.7px;top:339.3px" width="21" height="21" viewBox="0 0 20 20"><path d="M1 7.500 Q10 18.500 19 7.500" fill="none" stroke="#a0a0a0" stroke-width="1.500" stroke-linecap="round"/></svg>
<svg class="i" style="left:2199.2px;top:338.8px" width="22" height="22" viewBox="0 0 20 20"><path d="M1 5.500 Q1 4.300 2.200 4.300 H5.300 L6.800 2 H13.200 L14.700 4.300 H17.800 Q19 4.300 19 5.500 V16 Q19 17.200 17.800 17.200 H2.200 Q1 17.200 1 16 Z" fill="#dcdcdc"/><circle cx="10" cy="10.400" r="4.900" fill="#282828"/><circle cx="10" cy="10.400" r="3.500" fill="#dcdcdc"/><circle cx="10" cy="10.400" r="2.100" fill="#282828"/></svg>
<svg class="i" style="left:1945px;top:368.0px" width="24.6" height="24.6" viewBox="0 0 20 20"><path d="M3.400 3.800 H16.600 L10 16.800 Z" fill="none" stroke="#8e6040" stroke-width="3.700" stroke-linejoin="round"/></svg>
<span class="t" style="left:1978px;top:370.40000000000003px;color:#8c8c8c;">Cylinder.004</span>
<svg class="i" style="left:2110.3px;top:368.40000000000003px" width="23.4" height="23.4" viewBox="0 0 20 20"><path d="M4 4 H16 L10 16.500 Z" fill="none" stroke="#167e62" stroke-width="1.400"/><rect x="2" y="2" width="4" height="4" fill="#282828" stroke="#167e62" stroke-width="1.300"/><rect x="14" y="2" width="4" height="4" fill="#282828" stroke="#167e62" stroke-width="1.300"/><rect x="8" y="14.300" width="4" height="4" fill="#282828" stroke="#167e62" stroke-width="1.300"/></svg>
<svg class="i" style="left:2169.7px;top:369.3px" width="21" height="21" viewBox="0 0 20 20"><path d="M1 7.500 Q10 18.500 19 7.500" fill="none" stroke="#a0a0a0" stroke-width="1.500" stroke-linecap="round"/></svg>
<svg class="i" style="left:2199.2px;top:368.8px" width="22" height="22" viewBox="0 0 20 20"><path d="M1 5.500 Q1 4.300 2.200 4.300 H5.300 L6.800 2 H13.200 L14.700 4.300 H17.800 Q19 4.300 19 5.500 V16 Q19 17.200 17.800 17.200 H2.200 Q1 17.200 1 16 Z" fill="#dcdcdc"/><circle cx="10" cy="10.400" r="4.900" fill="#282828"/><circle cx="10" cy="10.400" r="3.500" fill="#dcdcdc"/><circle cx="10" cy="10.400" r="2.100" fill="#282828"/></svg>
<svg class="i" style="left:1945px;top:398.0px" width="24.6" height="24.6" viewBox="0 0 20 20"><path d="M3.400 3.800 H16.600 L10 16.800 Z" fill="none" stroke="#8e6040" stroke-width="3.700" stroke-linejoin="round"/></svg>
<span class="t" style="left:1978px;top:400.40000000000003px;color:#8c8c8c;">Cylinder.005</span>
<svg class="i" style="left:2110.3px;top:398.40000000000003px" width="23.4" height="23.4" viewBox="0 0 20 20"><path d="M4 4 H16 L10 16.500 Z" fill="none" stroke="#167e62" stroke-width="1.400"/><rect x="2" y="2" width="4" height="4" fill="#282828" stroke="#167e62" stroke-width="1.300"/><rect x="14" y="2" width="4" height="4" fill="#282828" stroke="#167e62" stroke-width="1.300"/><rect x="8" y="14.300" width="4" height="4" fill="#282828" stroke="#167e62" stroke-width="1.300"/></svg>
<svg class="i" style="left:2169.7px;top:399.3px" width="21" height="21" viewBox="0 0 20 20"><path d="M1 7.500 Q10 18.500 19 7.500" fill="none" stroke="#a0a0a0" stroke-width="1.500" stroke-linecap="round"/></svg>
<svg class="i" style="left:2199.2px;top:398.8px" width="22" height="22" viewBox="0 0 20 20"><path d="M1 5.500 Q1 4.300 2.200 4.300 H5.300 L6.800 2 H13.200 L14.700 4.300 H17.800 Q19 4.300 19 5.500 V16 Q19 17.200 17.800 17.200 H2.200 Q1 17.200 1 16 Z" fill="#dcdcdc"/><circle cx="10" cy="10.400" r="4.900" fill="#282828"/><circle cx="10" cy="10.400" r="3.500" fill="#dcdcdc"/><circle cx="10" cy="10.400" r="2.100" fill="#282828"/></svg>
<svg class="i" style="left:1945px;top:428.0px" width="24.6" height="24.6" viewBox="0 0 20 20"><path d="M3.400 3.800 H16.600 L10 16.800 Z" fill="none" stroke="#8e6040" stroke-width="3.700" stroke-linejoin="round"/></svg>
<span class="t" style="left:1978px;top:430.40000000000003px;color:#8c8c8c;">Cylinder.006</span>
<svg class="i" style="left:2110.3px;top:428.40000000000003px" width="23.4" height="23.4" viewBox="0 0 20 20"><path d="M4 4 H16 L10 16.500 Z" fill="none" stroke="#167e62" stroke-width="1.400"/><rect x="2" y="2" width="4" height="4" fill="#282828" stroke="#167e62" stroke-width="1.300"/><rect x="14" y="2" width="4" height="4" fill="#282828" stroke="#167e62" stroke-width="1.300"/><rect x="8" y="14.300" width="4" height="4" fill="#282828" stroke="#167e62" stroke-width="1.300"/></svg>
<svg class="i" style="left:2169.7px;top:429.3px" width="21" height="21" viewBox="0 0 20 20"><path d="M1 7.500 Q10 18.500 19 7.500" fill="none" stroke="#a0a0a0" stroke-width="1.500" stroke-linecap="round"/></svg>
<svg class="i" style="left:2199.2px;top:428.8px" width="22" height="22" viewBox="0 0 20 20"><path d="M1 5.500 Q1 4.300 2.200 4.300 H5.300 L6.800 2 H13.200 L14.700 4.300 H17.800 Q19 4.300 19 5.500 V16 Q19 17.200 17.800 17.200 H2.200 Q1 17.200 1 16 Z" fill="#dcdcdc"/><circle cx="10" cy="10.400" r="4.900" fill="#282828"/><circle cx="10" cy="10.400" r="3.500" fill="#dcdcdc"/><circle cx="10" cy="10.400" r="2.100" fill="#282828"/></svg>
<svg class="i" style="left:1945px;top:458.0px" width="24.6" height="24.6" viewBox="0 0 20 20"><path d="M3.400 3.800 H16.600 L10 16.800 Z" fill="none" stroke="#8e6040" stroke-width="3.700" stroke-linejoin="round"/></svg>
<span class="t" style="left:1978px;top:460.40000000000003px;color:#8c8c8c;">Cylinder.007</span>
<svg class="i" style="left:2110.3px;top:458.40000000000003px" width="23.4" height="23.4" viewBox="0 0 20 20"><path d="M4 4 H16 L10 16.500 Z" fill="none" stroke="#167e62" stroke-width="1.400"/><rect x="2" y="2" width="4" height="4" fill="#282828" stroke="#167e62" stroke-width="1.300"/><rect x="14" y="2" width="4" height="4" fill="#282828" stroke="#167e62" stroke-width="1.300"/><rect x="8" y="14.300" width="4" height="4" fill="#282828" stroke="#167e62" stroke-width="1.300"/></svg>
<svg class="i" style="left:2169.7px;top:459.3px" width="21" height="21" viewBox="0 0 20 20"><path d="M1 7.500 Q10 18.500 19 7.500" fill="none" stroke="#a0a0a0" stroke-width="1.500" stroke-linecap="round"/></svg>
<svg class="i" style="left:2199.2px;top:458.8px" width="22" height="22" viewBox="0 0 20 20"><path d="M1 5.500 Q1 4.300 2.200 4.300 H5.300 L6.800 2 H13.200 L14.700 4.300 H17.800 Q19 4.300 19 5.500 V16 Q19 17.200 17.800 17.200 H2.200 Q1 17.200 1 16 Z" fill="#dcdcdc"/><circle cx="10" cy="10.400" r="4.900" fill="#282828"/><circle cx="10" cy="10.400" r="3.500" fill="#dcdcdc"/><circle cx="10" cy="10.400" r="2.100" fill="#282828"/></svg>
<div style="left:1852px;top:484px;width:387px;height:4px;background:#161616;"></div>
<div style="left:2230.5px;top:215px;width:3px;height:92px;background:#4a4a4a;border-radius:2px;"></div>
<div style="left:1864px;top:479px;width:362px;height:3.5px;background:#3c3c3c;border-radius:2px;"></div>
<div style="left:1852px;top:488px;width:387px;height:846px;background:#303030;border-radius:6px;"></div>
<div style="left:1852px;top:526px;width:42.3px;height:808px;background:#1d1d1d;border-radius:0 0 0 6px;"></div>
<div class="btn" style="left:1865px;top:493px;width:47px;height:28px;"></div>
<svg class="i" style="left:1868px;top:494px" width="26.5" height="26.5" viewBox="0 0 24 24"><rect x="2.500" y="3" width="19" height="7.600" rx="3.800" fill="#d8d8d8"/><rect x="2.500" y="13.400" width="19" height="7.600" rx="3.800" fill="#d8d8d8"/><rect x="11.500" y="4.700" width="8.300" height="4.200" rx="2.100" fill="#282828"/><rect x="11.500" y="15.100" width="8.300" height="4.200" rx="2.100" fill="#282828"/></svg>
<svg class="i" style="left:1894px;top:500px" width="16" height="16" viewBox="-8 -8 16 16"><path d="M-4.3 -2.4 L0 2.4 L4.3 -2.4" fill="none" stroke="#d0d0d0" stroke-width="1.6" stroke-linecap="round" stroke-linejoin="round"/></svg>
<div style="left:1954px;top:493px;width:173px;height:28px;background:#1d1d1d;border:1px solid #3a3a3a;border-radius:6px;"></div>
<svg class="i" style="left:1959px;top:494px" width="25" height="25" viewBox="0 0 20 20"><circle cx="12" cy="8" r="5.3" fill="none" stroke="#d0d0d0" stroke-width="1.6"/><path d="M8.2 11.8 L2.4 17.6" stroke="#d0d0d0" stroke-width="1.9" stroke-linecap="round"/></svg>
<div class="btn" style="left:2198px;top:493px;width:29px;height:28px;"></div>
<svg class="i" style="left:2204px;top:500px" width="16" height="16" viewBox="-8 -8 16 16"><path d="M-4.3 -2.4 L0 2.4 L4.3 -2.4" fill="none" stroke="#d0d0d0" stroke-width="1.6" stroke-linecap="round" stroke-linejoin="round"/></svg>
<div style="left:1852px;top:580.5px;width:42.3px;height:1.5px;background:#181818;"></div>
<div style="left:1852px;top:803px;width:42.3px;height:1.5px;background:#181818;"></div>
<div style="left:1852px;top:862px;width:42.3px;height:1.5px;background:#181818;"></div>
<div style="left:1852px;top:1167.5px;width:42.3px;height:1.5px;background:#181818;"></div>
<div style="left:1852px;top:1221px;width:42.3px;height:1.5px;background:#181818;"></div>
<div style="left:1854px;top:911px;width:40px;height:40px;background:#303030;border-radius:6px 0 0 6px;"></div>
<svg class="i" style="left:1860.7px;top:546px" width="26" height="26" viewBox="0 0 24 24"><path d="M6 3 V10" stroke="#b6b6b6" stroke-width="1.500"/><path d="M3.600 12.500 Q3.600 10.600 6 10.600 Q8.400 10.600 8.400 12.500 V17 Q8.400 19.500 6 19.500 Q3.600 19.500 3.600 17 Z" fill="#b6b6b6"/><path d="M13.200 2.800 V6.800 L15 8 H16.600 L18.400 6.800 V2.800 Q21 4.200 21 7.200 Q21 9.800 18.400 11 V19.500 Q18.400 21.400 15.800 21.400 Q13.200 21.400 13.200 19.500 V11 Q10.600 9.800 10.600 7.200 Q10.600 4.200 13.200 2.800 Z" fill="#b6b6b6"/></svg>
<svg class="i" style="left:1860.7px;top:599px" width="26" height="26" viewBox="0 0 24 24"><path d="M3 7.500 H7 L8.500 4.500 H15 L16.500 7.500 H21 V20 H3 Z" fill="none" stroke="#b6b6b6" stroke-width="1.600" stroke-linejoin="round"/><rect x="5.500" y="10" width="9.500" height="7.500" fill="#b6b6b6"/><circle cx="18" cy="11.200" r="1.200" fill="#b6b6b6"/><circle cx="18" cy="15.500" r="1.200" fill="#b6b6b6"/><path d="M6.500 12 H14 M6.500 14 H14 M6.500 16 H14" stroke="#1d1d1d" stroke-width="0.800"/></svg>
<svg class="i" style="left:1860.7px;top:641.5px" width="26" height="26" viewBox="0 0 24 24"><path d="M2.500 4.500 Q2.500 3 4 3 H20 Q21.500 3 21.500 4.500 V11.500 H18.500 V8 H5.500 V11.500 H2.500 Z" fill="#b6b6b6"/><rect x="6.600" y="10" width="10.800" height="11" fill="#b6b6b6"/><path d="M8.500 19 L12 14 L15.500 19 Z" fill="#1d1d1d"/><circle cx="15" cy="12.800" r="1" fill="#1d1d1d"/></svg>
<svg class="i" style="left:1860.7px;top:684px" width="26" height="26" viewBox="0 0 24 24"><path d="M3 9 V21 H15" fill="none" stroke="#b6b6b6" stroke-width="1.200"/><path d="M5.500 6.500 V18.500 H17.500" fill="none" stroke="#b6b6b6" stroke-width="1.200"/><rect x="8.200" y="3" width="13" height="12.600" fill="#1d1d1d" stroke="#b6b6b6" stroke-width="1.500"/><path d="M9.500 14.200 L13.500 7.500 L16.800 12.200 L18 10.800 L20 14.200 Z" fill="#b6b6b6"/><circle cx="18.200" cy="6.300" r="1.200" fill="#b6b6b6"/></svg>
<svg class="i" style="left:1860.7px;top:725.5px" width="26" height="26" viewBox="0 0 24 24"><path d="M7 2.500 L12 14.500 Q12 17.500 7 17.500 Q2 17.500 2 14.500 Z" fill="#b6b6b6"/><circle cx="18" cy="5" r="2.800" fill="#b6b6b6"/><circle cx="16" cy="16.500" r="5.200" fill="#1d1d1d" stroke="#b6b6b6" stroke-width="1.700"/><circle cx="16" cy="16.500" r="1.900" fill="none" stroke="#b6b6b6" stroke-width="1.200"/></svg>
<svg class="i" style="left:1860.7px;top:768px" width="26" height="26" viewBox="0 0 24 24"><circle cx="12" cy="12.500" r="8.600" fill="none" stroke="#c8535f" stroke-width="1.600"/><path d="M8 6.500 Q11 5 13 6.500 Q14 9 11.500 10.500 Q9 12.500 6.500 11 Q5.500 8.500 8 6.500 Z M12.500 13.500 Q15.500 12.500 17.500 14.500 Q17 18 14 18.500 Q12 16.500 12.500 13.500 Z" fill="#c8535f"/><path d="M3.500 21 L6 18.500 M18.500 5.500 L21 3" stroke="#c8535f" stroke-width="1.600" stroke-linecap="round"/></svg>
<svg class="i" style="left:1860.7px;top:822.5px" width="26" height="26" viewBox="0 0 24 24"><rect x="3" y="3.500" width="18" height="4.500" fill="none" stroke="#dcdcdc" stroke-width="1.600"/><path d="M4.500 8 V20.500 H19.500 V8" fill="none" stroke="#dcdcdc" stroke-width="1.600"/><rect x="10" y="11" width="4" height="2.400" fill="#dcdcdc"/></svg>
<svg class="i" style="left:1860.7px;top:876px" width="26" height="26" viewBox="0 0 24 24"><rect x="7.200" y="7.200" width="9.600" height="9.600" fill="#d9894a"/><path d="M6.500 3.500 H3.500 V6.500 M17.500 3.500 H20.500 V6.500 M3.500 17.500 V20.500 H6.500 M20.500 17.500 V20.500 H17.500" fill="none" stroke="#d9894a" stroke-width="1.300" opacity="0.7"/></svg>
<svg class="i" style="left:1860.7px;top:918px" width="26" height="26" viewBox="0 0 24 24"><path d="M4.500 19.500 L13.500 10.500" stroke="#6ea0ff" stroke-width="4" stroke-linecap="round"/><circle cx="15.800" cy="8.200" r="5.400" fill="#6ea0ff"/><path d="M15.800 8.200 L17.200 1 L23.500 6.500 Z" fill="#303030"/><path d="M16.800 7.200 L19.500 4.500" stroke="#303030" stroke-width="3.400" stroke-linecap="round"/></svg>
<svg class="i" style="left:1860.7px;top:960px" width="26" height="26" viewBox="0 0 24 24"><circle cx="6.500" cy="6" r="3.200" fill="#5b84d0"/><circle cx="18" cy="6" r="1.800" fill="#5b84d0"/><circle cx="6.500" cy="18.500" r="1.800" fill="#5b84d0"/><circle cx="18.500" cy="18.500" r="2.400" fill="#5b84d0"/><path d="M6.500 6 H18 M6.500 6 V18.500 M6.500 6 L18.500 18.500" stroke="#5b84d0" stroke-width="1.300"/></svg>
<svg class="i" style="left:1860.7px;top:1002px" width="26" height="26" viewBox="0 0 24 24"><path d="M19 8.500 A8.300 8.300 0 1 0 20 15" fill="none" stroke="#5b84d0" stroke-width="1.600" stroke-linecap="round"/><circle cx="11.500" cy="12.500" r="3.600" fill="#5b84d0"/><circle cx="19" cy="5" r="2.200" fill="#5b84d0"/></svg>
<svg class="i" style="left:1860.7px;top:1044px" width="26" height="26" viewBox="0 0 24 24"><path d="M3 15 Q3 10 8 8.500 L15.500 3.500 Q20 1.500 21.500 5.500 Q22.500 9 19 12 L14 19 Q11 22 7 20.500 Q3 19 3 15 Z" fill="none" stroke="#5b84d0" stroke-width="1.600"/><circle cx="9" cy="14.500" r="3.400" fill="none" stroke="#5b84d0" stroke-width="1.600"/><circle cx="9" cy="14.500" r="1.200" fill="#5b84d0"/><circle cx="18" cy="6.500" r="1.300" fill="#5b84d0"/></svg>
<svg class="i" style="left:1860.7px;top:1085.5px" width="26" height="26" viewBox="0 0 24 24"><path d="M5.500 5 H18.500 L12 19 Z" fill="none" stroke="#1fc898" stroke-width="1.700"/><rect x="3" y="2.800" width="4.600" height="4.600" fill="#1d1d1d" stroke="#1fc898" stroke-width="1.400"/><rect x="16.400" y="2.800" width="4.600" height="4.600" fill="#1d1d1d" stroke="#1fc898" stroke-width="1.400"/><rect x="9.700" y="17" width="4.600" height="4.600" fill="#1d1d1d" stroke="#1fc898" stroke-width="1.400"/></svg>
<svg class="i" style="left:1860.7px;top:1128px" width="26" height="26" viewBox="0 0 24 24"><circle cx="12" cy="12" r="8.800" fill="#c8535f"/><path d="M12 12 V4.400 A7.600 7.600 0 0 1 19.600 12 Z" fill="#1d1d1d"/><path d="M4.600 13.500 Q9 17.500 15.500 15.500 Q18 14.500 19.400 12.800 A7.600 7.600 0 0 1 4.600 13.500 Z" fill="#1d1d1d"/></svg>
<svg class="i" style="left:1860.7px;top:1181.5px" width="26" height="26" viewBox="0 0 24 24"><rect x="3" y="3" width="18" height="18" fill="#c8535f"/><rect x="4.20" y="4.20" width="3.900" height="3.900" fill="#1d1d1d"/><rect x="4.20" y="12.00" width="3.900" height="3.900" fill="#1d1d1d"/><rect x="8.10" y="8.10" width="3.900" height="3.900" fill="#1d1d1d"/><rect x="8.10" y="15.90" width="3.900" height="3.900" fill="#1d1d1d"/><rect x="12.00" y="4.20" width="3.900" height="3.900" fill="#1d1d1d"/><rect x="12.00" y="12.00" width="3.900" height="3.900" fill="#1d1d1d"/><rect x="15.90" y="8.10" width="3.900" height="3.900" fill="#1d1d1d"/><rect x="15.90" y="15.90" width="3.900" height="3.900" fill="#1d1d1d"/></svg>
<svg class="i" style="left:1907px;top:539px" width="28" height="28" viewBox="0 0 24 24"><rect x="7" y="7" width="10" height="10" fill="#dcdcdc"/><path d="M6.500 3.500 H3.500 V6.500 M17.500 3.500 H20.500 V6.500 M3.500 17.500 V20.500 H6.500 M20.500 17.500 V20.500 H17.500" fill="none" stroke="#dcdcdc" stroke-width="1.400" opacity="0.650"/></svg>
<span class="t" style="left:1945px;top:541.6px;color:#e0e0e0;">Cube.003</span>
<svg class="i" style="left:2200px;top:540px" width="26" height="26" viewBox="0 0 20 20"><path d="M11.5 2.5 L17.5 8.5 L15.8 9.4 L13.6 8.8 L10.4 12 L10.6 14.6 L9.4 15.8 L4.2 10.6 L5.4 9.4 L8 9.6 L11.2 6.4 L10.6 4.2 Z" fill="none" stroke="#8a8a8a" stroke-width="1.3" stroke-linejoin="round"/><path d="M6.6 13.4 L2.4 17.6" stroke="#8a8a8a" stroke-width="1.5" stroke-linecap="round"/></svg>
<div class="btn" style="left:1906px;top:592.5px;width:321px;height:29px;"></div>
<span class="t" style="left:1918px;top:596px;color:#e4e4e4;">Add Modifier</span>
<svg class="i" style="left:2209px;top:600px" width="16" height="16" viewBox="-8 -8 16 16"><path d="M-4.3 -2.4 L0 2.4 L4.3 -2.4" fill="none" stroke="#d0d0d0" stroke-width="1.6" stroke-linecap="round" stroke-linejoin="round"/></svg>
<div style="left:0px;top:1241px;width:1849px;height:93px;background:#1d1d1d;border-radius:6px;"></div>
<div style="left:0px;top:1241px;width:1849px;height:39px;background:#303030;border-radius:6px 6px 0 0;"></div>
<div class="btn" style="left:13px;top:1246px;width:47px;height:29px;"></div>
<svg class="i" style="left:19px;top:1249px;" width="24" height="24" viewBox="0 0 24 24"><circle cx="11" cy="12" r="10.200" fill="#e0e0e0"/><path d="M13.500 6.500 L8.500 12.500 L13 16.500" fill="none" stroke="#282828" stroke-width="2.200" stroke-linecap="round" stroke-linejoin="round"/></svg>
<svg class="i" style="left:42px;top:1254px" width="16" height="16" viewBox="-8 -8 16 16"><path d="M-4.3 -2.4 L0 2.4 L4.3 -2.4" fill="none" stroke="#d0d0d0" stroke-width="1.6" stroke-linecap="round" stroke-linejoin="round"/></svg>
<div class="btn" style="left:68px;top:1246px;width:198px;height:29px;"></div>
<div style="left:174px;top:1246px;width:1px;height:29px;background:#3a3a3a;"></div>
<span class="t" style="left:79px;top:1250px;color:#e0e0e0;">Playback</span>
<svg class="i" style="left:157px;top:1254px" width="16" height="16" viewBox="-8 -8 16 16"><path d="M-4.3 -2.4 L0 2.4 L4.3 -2.4" fill="none" stroke="#d0d0d0" stroke-width="1.6" stroke-linecap="round" stroke-linejoin="round"/></svg>
<span class="t" style="left:186px;top:1250px;color:#e0e0e0;">Keying</span>
<svg class="i" style="left:248px;top:1254px" width="16" height="16" viewBox="-8 -8 16 16"><path d="M-4.3 -2.4 L0 2.4 L4.3 -2.4" fill="none" stroke="#d0d0d0" stroke-width="1.6" stroke-linecap="round" stroke-linejoin="round"/></svg>
<span class="t" style="left:280px;top:1250px;color:#d4d4d4;">View</span>
<span class="t" style="left:341px;top:1250px;color:#d4d4d4;">Marker</span>
<div class="btn" style="left:785px;top:1247px;width:58px;height:28px;"></div>
<div style="left:785px;top:1247px;width:29px;height:28px;background:#545454;border-radius:6px 0 0 6px;"></div>
<div style="left:793px;top:1255px;width:12px;height:12px;background:#e6e6e6;border-radius:50%;"></div>
<svg class="i" style="left:820px;top:1254px" width="16" height="16" viewBox="-8 -8 16 16"><path d="M-4.3 -2.4 L0 2.4 L4.3 -2.4" fill="none" stroke="#5a5a5a" stroke-width="1.6" stroke-linecap="round" stroke-linejoin="round"/></svg>
<div style="left:852px;top:1247px;width:178px;height:28px;background:#545454;border-radius:6px;"></div>
<div style="left:879.6px;top:1247px;width:1px;height:28px;background:#3c3c3c;"></div>
<div style="left:909.8px;top:1247px;width:1px;height:28px;background:#3c3c3c;"></div>
<div style="left:939.9px;top:1247px;width:1px;height:28px;background:#3c3c3c;"></div>
<div style="left:970px;top:1247px;width:1px;height:28px;background:#3c3c3c;"></div>
<div style="left:1000px;top:1247px;width:1px;height:28px;background:#3c3c3c;"></div>
<svg class="i" style="left:0;top:1241px" width="1849" height="40" viewBox="0 1241 1849 40"><rect x="859" y="1254" width="2.800" height="14" fill="#ececec"/><path d="M863.500 1261 L873 1254.500 V1267.500 Z" fill="#ececec"/><path d="M883.500 1261 L890 1253.500 L896.500 1261 L890 1268.500 Z" fill="#ececec"/><path d="M898.500 1261 L906 1255.500 V1266.500 Z" fill="#ececec"/><path d="M917.500 1261 L933 1252.500 V1269.500 Z" fill="#ececec"/><path d="M963.500 1261 L948 1252.500 V1269.500 Z" fill="#ececec"/><path d="M982 1261 L974.500 1255.500 V1266.500 Z" fill="#ececec"/><path d="M984 1261 L990.500 1253.500 L997 1261 L990.500 1268.500 Z" fill="#ececec"/><path d="M1018.500 1261 L1009 1254.500 V1267.500 Z" fill="#ececec"/><rect x="1020" y="1254" width="2.800" height="14" fill="#ececec"/></svg>
<div style="left:1426px;top:1247px;width:110px;height:28px;background:#545454;border-radius:6px;"></div>
<span class="t c" style="left:1480px;top:1250px;color:#e6e6e6;">0</span>
<div style="left:1545px;top:1247px;width:291.5px;height:28px;background:#545454;border-radius:6px;"></div>
<div style="left:1573px;top:1247px;width:1px;height:28px;background:#3c3c3c;"></div>
<div style="left:1708px;top:1247px;width:1px;height:28px;background:#3c3c3c;"></div>
<svg class="i" style="left:1547px;top:1249px;" width="24" height="24" viewBox="0 0 24 24"><circle cx="12" cy="13.500" r="8" fill="none" stroke="#e6e6e6" stroke-width="1.500"/><path d="M12 9 V14 H16 M9.500 3 H14.500 M12 3 V5.500 M19 7 L20.500 5.500" fill="none" stroke="#e6e6e6" stroke-width="1.500" stroke-linecap="round"/></svg>
<span class="t" style="left:1597px;top:1250px;color:#e6e6e6;">Start</span>
<span class="t" style="right:550.5px;top:1250px;color:#e6e6e6;">1</span>
<span class="t" style="left:1732.5px;top:1250px;color:#e6e6e6;">End</span>
<span class="t" style="right:422.5px;top:1250px;color:#e6e6e6;">250</span>
<svg class="i" style="left:0;top:1280px" width="1849" height="54" viewBox="0 1280 1849 54"><rect x="68" y="1313" width="1713" height="21.500" fill="#2d2d2d"/><rect x="96.2" y="1313" width="1.1" height="21.500" fill="#202020"/><rect x="130.5" y="1313" width="1.1" height="21.500" fill="#1b1b1b"/><rect x="164.9" y="1313" width="1.1" height="21.500" fill="#202020"/><rect x="199.3" y="1313" width="1.1" height="21.500" fill="#1b1b1b"/><rect x="233.7" y="1313" width="1.1" height="21.500" fill="#202020"/><rect x="268.1" y="1313" width="1.1" height="21.500" fill="#1b1b1b"/><rect x="302.4" y="1313" width="1.1" height="21.500" fill="#202020"/><rect x="336.8" y="1313" width="1.1" height="21.500" fill="#1b1b1b"/><rect x="371.2" y="1313" width="1.1" height="21.500" fill="#202020"/><rect x="405.6" y="1313" width="1.1" height="21.500" fill="#1b1b1b"/><rect x="439.9" y="1313" width="1.1" height="21.500" fill="#202020"/><rect x="474.3" y="1313" width="1.1" height="21.500" fill="#1b1b1b"/><rect x="508.7" y="1313" width="1.1" height="21.500" fill="#202020"/><rect x="543.1" y="1313" width="1.1" height="21.500" fill="#1b1b1b"/><rect x="577.4" y="1313" width="1.1" height="21.500" fill="#202020"/><rect x="611.8" y="1313" width="1.1" height="21.500" fill="#1b1b1b"/><rect x="646.2" y="1313" width="1.1" height="21.500" fill="#202020"/><rect x="680.6" y="1313" width="1.1" height="21.500" fill="#1b1b1b"/><rect x="714.9" y="1313" width="1.1" height="21.500" fill="#202020"/><rect x="749.3" y="1313" width="1.1" height="21.500" fill="#1b1b1b"/><rect x="783.7" y="1313" width="1.1" height="21.500" fill="#202020"/><rect x="818.1" y="1313" width="1.1" height="21.500" fill="#1b1b1b"/><rect x="852.4" y="1313" width="1.1" height="21.500" fill="#202020"/><rect x="886.8" y="1313" width="1.1" height="21.500" fill="#1b1b1b"/><rect x="921.2" y="1313" width="1.1" height="21.500" fill="#202020"/><rect x="955.6" y="1313" width="1.1" height="21.500" fill="#1b1b1b"/><rect x="989.9" y="1313" width="1.1" height="21.500" fill="#202020"/><rect x="1024.3" y="1313" width="1.1" height="21.500" fill="#1b1b1b"/><rect x="1058.7" y="1313" width="1.1" height="21.500" fill="#202020"/><rect x="1093.0" y="1313" width="1.1" height="21.500" fill="#1b1b1b"/><rect x="1127.4" y="1313" width="1.1" height="21.500" fill="#202020"/><rect x="1161.8" y="1313" width="1.1" height="21.500" fill="#1b1b1b"/><rect x="1196.2" y="1313" width="1.1" height="21.500" fill="#202020"/><rect x="1230.5" y="1313" width="1.1" height="21.500" fill="#1b1b1b"/><rect x="1264.9" y="1313" width="1.1" height="21.500" fill="#202020"/><rect x="1299.3" y="1313" width="1.1" height="21.500" fill="#1b1b1b"/><rect x="1333.7" y="1313" width="1.1" height="21.500" fill="#202020"/><rect x="1368.0" y="1313" width="1.1" height="21.500" fill="#1b1b1b"/><rect x="1402.4" y="1313" width="1.1" height="21.500" fill="#202020"/><rect x="1436.8" y="1313" width="1.1" height="21.500" fill="#1b1b1b"/><rect x="1471.2" y="1313" width="1.1" height="21.500" fill="#202020"/><rect x="1505.5" y="1313" width="1.1" height="21.500" fill="#1b1b1b"/><rect x="1539.9" y="1313" width="1.1" height="21.500" fill="#202020"/><rect x="1574.3" y="1313" width="1.1" height="21.500" fill="#1b1b1b"/><rect x="1608.7" y="1313" width="1.1" height="21.500" fill="#202020"/><rect x="1643.0" y="1313" width="1.1" height="21.500" fill="#1b1b1b"/><rect x="1677.4" y="1313" width="1.1" height="21.500" fill="#202020"/><rect x="1711.8" y="1313" width="1.1" height="21.500" fill="#1b1b1b"/><rect x="1746.2" y="1313" width="1.1" height="21.500" fill="#202020"/><rect x="1780.5" y="1313" width="1.1" height="21.500" fill="#1b1b1b"/><rect x="1814.9" y="1313" width="1.1" height="21.500" fill="#202020"/></svg>
<span class="t c" style="left:130.85px;top:1285.8px;color:#c0c0c0;">10</span>
<span class="t c" style="left:199.6px;top:1285.8px;color:#c0c0c0;">20</span>
<span class="t c" style="left:268.35px;top:1285.8px;color:#c0c0c0;">30</span>
<span class="t c" style="left:337.1px;top:1285.8px;color:#c0c0c0;">40</span>
<span class="t c" style="left:405.85px;top:1285.8px;color:#c0c0c0;">50</span>
<span class="t c" style="left:474.6px;top:1285.8px;color:#c0c0c0;">60</span>
<span class="t c" style="left:543.35px;top:1285.8px;color:#c0c0c0;">70</span>
<span class="t c" style="left:612.1px;top:1285.8px;color:#c0c0c0;">80</span>
<span class="t c" style="left:680.85px;top:1285.8px;color:#c0c0c0;">90</span>
<span class="t c" style="left:749.6px;top:1285.8px;color:#c0c0c0;">100</span>
<span class="t c" style="left:818.35px;top:1285.8px;color:#c0c0c0;">110</span>
<span class="t c" style="left:887.1px;top:1285.8px;color:#c0c0c0;">120</span>
<span class="t c" style="left:955.85px;top:1285.8px;color:#c0c0c0;">130</span>
<span class="t c" style="left:1024.6px;top:1285.8px;color:#c0c0c0;">140</span>
<span class="t c" style="left:1093.35px;top:1285.8px;color:#c0c0c0;">150</span>
<span class="t c" style="left:1162.1px;top:1285.8px;color:#c0c0c0;">160</span>
<span class="t c" style="left:1230.85px;top:1285.8px;color:#c0c0c0;">170</span>
<span class="t c" style="left:1299.6px;top:1285.8px;color:#c0c0c0;">180</span>
<span class="t c" style="left:1368.35px;top:1285.8px;color:#c0c0c0;">190</span>
<span class="t c" style="left:1437.1px;top:1285.8px;color:#c0c0c0;">200</span>
<span class="t c" style="left:1505.85px;top:1285.8px;color:#c0c0c0;">210</span>
<span class="t c" style="left:1574.6px;top:1285.8px;color:#c0c0c0;">220</span>
<span class="t c" style="left:1643.35px;top:1285.8px;color:#c0c0c0;">230</span>
<span class="t c" style="left:1712.1px;top:1285.8px;color:#c0c0c0;">240</span>
<span class="t c" style="left:1780.85px;top:1285.8px;color:#c0c0c0;">250</span>
<div style="left:13px;top:1317.8px;width:1825px;height:12.8px;background:#4e4e4e;border-radius:7px;"></div>
<div style="left:15.5px;top:1319.9px;width:8.6px;height:8.6px;background:#2a2a2a;border-radius:50%;"></div>
<div style="left:1826.4px;top:1319.9px;width:8.6px;height:8.6px;background:#2a2a2a;border-radius:50%;"></div>
<div style="left:60.5px;top:1305px;width:2px;height:29px;background:#4772b3;"></div>
<div style="left:43.5px;top:1283.5px;width:36.5px;height:26px;background:#4772b3;border-radius:5px;"></div>
<span class="t c" style="left:61.8px;top:1285.8px;color:#fff;">0</span>
<div style="left:1841px;top:1292px;width:5px;height:41px;background:#333;border-radius:3px;"></div>
<svg class="i" style="left:1838px;top:1303px;" width="10" height="16" viewBox="0 0 10 16"><path d="M8 2 L2.500 8 L8 14" fill="none" stroke="#6a6a6a" stroke-width="1.400"/></svg>
<svg class="i" style="left:0px;top:1303px;" width="10" height="16" viewBox="0 0 10 16"><path d="M2 2 L7.500 8 L2 14" fill="none" stroke="#6a6a6a" stroke-width="1.400"/></svg>
<div style="left:0px;top:1337px;width:2239px;height:28px;background:#1b1b1b;"></div>
<svg class="i" style="left:16.5px;top:1339.5px;" width="19" height="23.2" viewBox="0 0 18 22"><path d="M9 1.500 H11 Q15.500 1.500 15.500 6 V16 Q15.500 20.500 11 20.500 H7 Q2.500 20.500 2.500 16 V11" fill="none" stroke="#909090" stroke-width="1.400"/><path d="M2 9.500 V5.500 Q2 1 7.500 1 V9.500 Z" fill="#909090"/></svg>
<span class="t" style="left:51px;top:1339px;color:#a0a0a0;">Select</span>
<svg class="i" style="left:367px;top:1339.5px;" width="19" height="23.2" viewBox="0 0 18 22"><rect x="2.500" y="1.500" width="13" height="19" rx="4.500" fill="none" stroke="#909090" stroke-width="1.400"/><rect x="7.300" y="4" width="3.400" height="7" rx="1.500" fill="#909090"/></svg>
<span class="t" style="left:401px;top:1339px;color:#a0a0a0;">Rotate View</span>
<svg class="i" style="left:717.5px;top:1339.5px;" width="19" height="23.2" viewBox="0 0 18 22"><path d="M9 1.500 H7 Q2.500 1.500 2.500 6 V16 Q2.500 20.500 7 20.500 H11 Q15.500 20.500 15.500 16 V11" fill="none" stroke="#909090" stroke-width="1.400"/><path d="M16 9.500 V5.500 Q16 1 10.500 1 V9.500 Z" fill="#909090"/></svg>
<span class="t" style="left:751px;top:1339px;color:#a0a0a0;">Object Context Menu</span>
<span class="t" style="right:13px;top:1339px;color:#a0a0a0;">3.3.5</span>
</div></body></html>
